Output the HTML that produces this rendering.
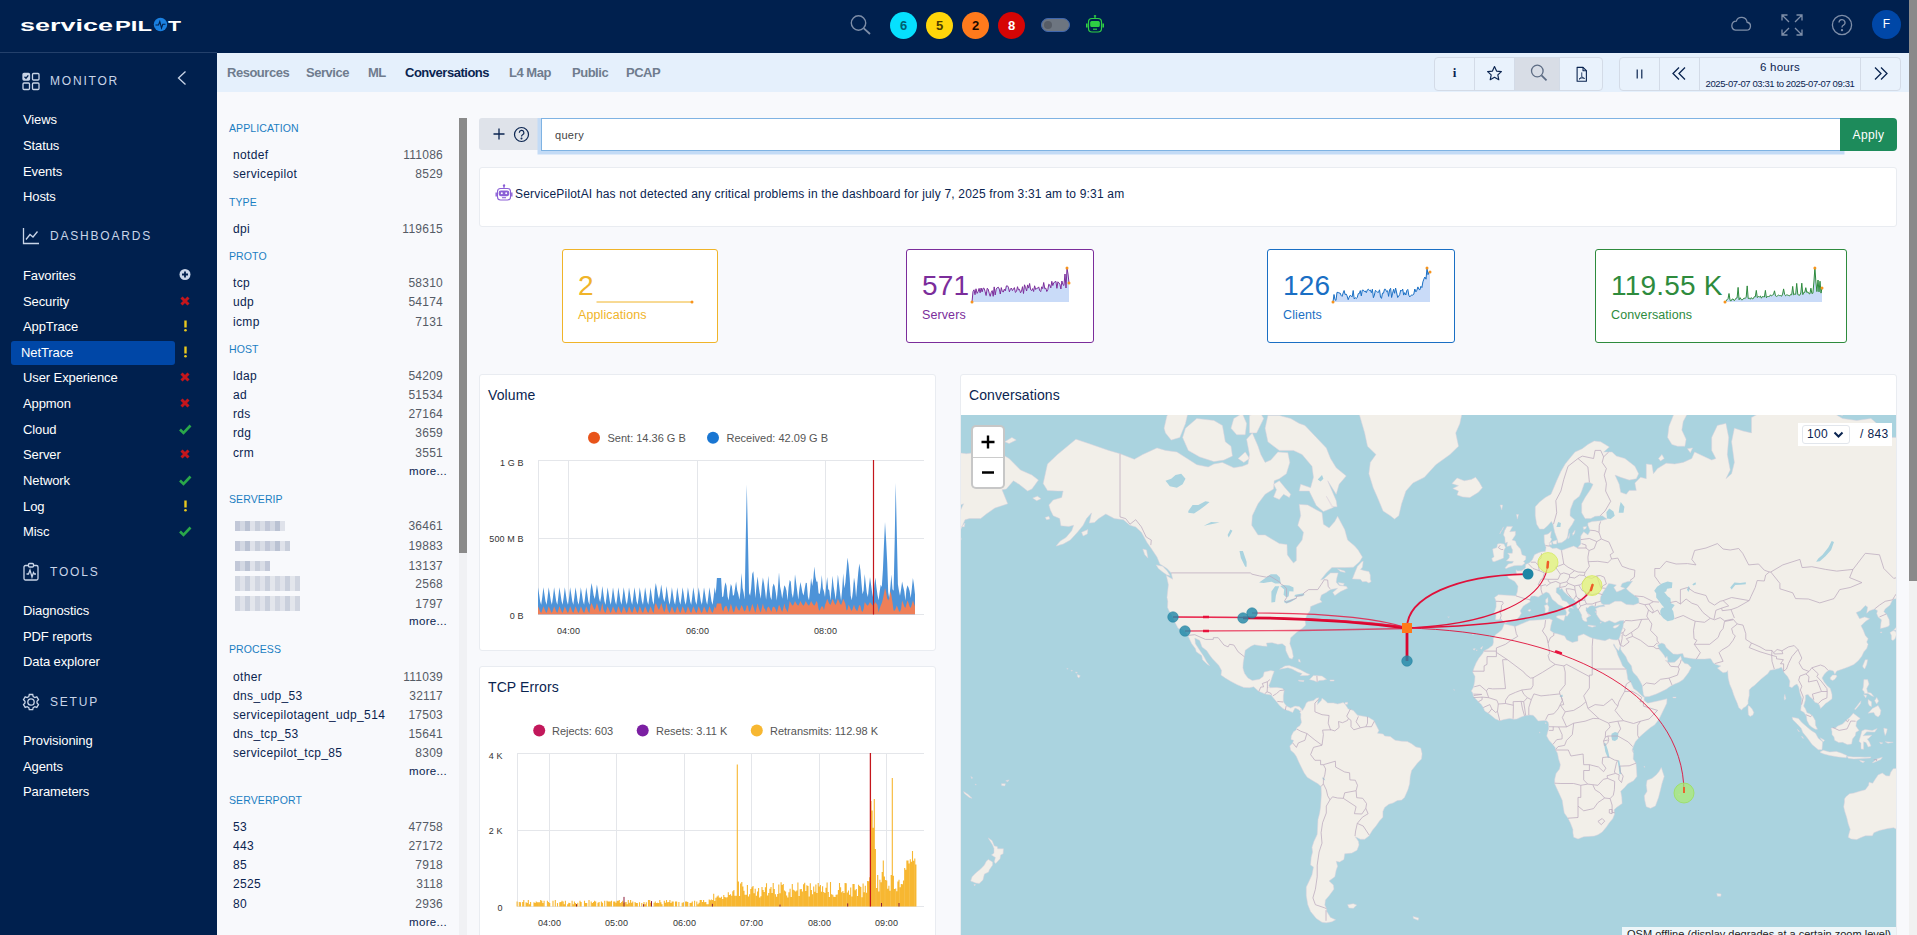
<!DOCTYPE html>
<html lang="en">
<head>
<meta charset="utf-8">
<title>ServicePilot - NetTrace Conversations</title>
<style>
*{box-sizing:border-box;margin:0;padding:0}
html,body{width:1917px;height:935px;overflow:hidden;background:#f8f9fc;font-family:"Liberation Sans",sans-serif;color:#00204e}
body{position:relative}
.abs{position:absolute}
/* top bar */
#top{z-index:2;position:absolute;left:0;top:0;width:1909px;height:53px;background:#00204e}
#side{position:absolute;left:0;top:0;width:217px;height:935px;background:#00204e}
#sline{z-index:3;position:absolute;left:0;top:52px;width:217px;height:1px;background:#23406b}
#side .hd{margin-top:1px;position:absolute;left:50px;font-size:12px;letter-spacing:1.8px;color:#c9d5e8;white-space:nowrap}
#side .it{margin-top:1px;position:absolute;left:23px;font-size:13px;color:#fff;white-space:nowrap;letter-spacing:-0.1px}
#side .st{margin-top:1px;position:absolute;left:178px;width:14px;height:14px}
/* tab bar */
#tabs{position:absolute;left:217px;top:53px;width:1692px;height:38.5px;background:#e5f0fc}
#tabs .t{position:absolute;top:12px;font-size:13px;font-weight:bold;color:#6f7c8e;white-space:nowrap;letter-spacing:-0.48px}
#tabs .t.on{color:#0a2450}
.bdg{position:absolute;top:12px;width:27px;height:27px;border-radius:50%;font-size:13px;font-weight:bold;text-align:center;line-height:27px}
.bg{position:absolute;top:3.5px;height:34px;border:1px solid #d3dbe7;border-radius:4px;background:#e9f2fc}
.bg .d{position:absolute;top:0;width:1px;height:32px;background:#d3dbe7}

#fac .h{margin-top:1px;position:absolute;left:229px;font-size:10.5px;color:#1b7ec2;letter-spacing:.1px;white-space:nowrap}
#fac .r{margin-top:1px;position:absolute;left:233px;width:210px;font-size:12px;color:#0a2450;letter-spacing:.35px;white-space:nowrap}
#fac .r b{position:absolute;right:0;top:0;font-weight:normal;color:#555b66;letter-spacing:.25px}
#fac .m{margin-top:1px;position:absolute;left:233px;width:214px;text-align:right;font-size:11.5px;color:#0a2450;letter-spacing:.3px}
#fac .bl{position:absolute;left:235px;height:10px;background:repeating-linear-gradient(90deg,#c2c8d8 0 5px,#d3d8e3 5px 10px,#bac2d3 10px 15px,#dfe2ea 15px 20px,#c8cedb 20px 25px,#d9dde6 25px 30px);filter:blur(.6px)}
#fac .bl.t{height:15px;background:repeating-linear-gradient(90deg,#d0d5e0 0 5px,#dfe2ea 5px 10px,#c9cfdc 10px 15px,#e3e6ec 15px 20px)}
#ftr{position:absolute;left:459px;top:553px;width:8px;height:382px;background:#f0f1f4}
#fsb{position:absolute;left:459px;top:118px;width:8px;height:435px;background:#8a8a8a}


#qadd{position:absolute;left:479px;top:118px;width:59px;height:32px;background:#dfe3ea;border-radius:3px 0 0 3px}
#qin{position:absolute;left:541px;top:118px;width:1300px;height:33px;background:#fff;border:1px solid #7fb3e3;box-shadow:0 0 0 3.5px #c3dbf6;clip-path:inset(0 -4px -4px -4px);font-size:11px;color:#444;padding:10px 0 0 13px;letter-spacing:.3px}
#qap{position:absolute;left:1840px;top:118px;width:57px;height:33px;background:#1d8b5b;border-radius:0 4px 4px 0;color:#fff;font-size:12px;text-align:center;line-height:35px;letter-spacing:.4px}
.pan{position:absolute;background:#fff;border:1px solid #e9ecf1;border-radius:3px}
#ai{left:479px;top:167px;width:1418px;height:60px}
#ai span{position:absolute;left:35px;top:19px;font-size:12px;color:#0a2450;letter-spacing:.19px;white-space:nowrap}
.pt{position:absolute;left:8px;top:12px;font-size:14px;color:#0a2450;letter-spacing:.1px;white-space:nowrap}


.kpi{position:absolute;top:249px;height:94px;background:#fff;border:1px solid;border-radius:3px}
.kpi .v{position:absolute;left:15px;top:19px;font-size:28px;line-height:34px;letter-spacing:.2px;white-space:nowrap}
.kpi .l{position:absolute;left:15px;top:58px;font-size:12.5px;letter-spacing:.1px;white-space:nowrap}


.ax{font-size:9px;fill:#333;letter-spacing:.1px}
.lg{font-size:11px;fill:#555;letter-spacing:0}


#map{position:absolute;left:961px;top:415px;width:935px;height:520px;overflow:hidden;background:#aad3df}
#zc{position:absolute;left:10px;top:10px;width:34px;height:64px;border:2px solid rgba(0,0,0,.22);border-radius:5px;background:#fff}
#zc i{position:absolute;left:0;top:29.500px;width:30px;height:1px;background:#ccc}
#msel{position:absolute;left:837px;top:8px;width:94px;height:23px;background:#fff;font:12px "Liberation Sans",sans-serif;color:#0a2450}
#attr{position:absolute;right:0;top:512px;height:20px;background:rgba(255,255,255,.8);padding:1px 5px;font-size:11px;color:#222;white-space:nowrap}

/* page scrollbar */
#psb{position:absolute;left:1909px;top:0;width:8px;height:935px;background:#f1f1f1}
#psb i{position:absolute;left:0;top:0;width:8px;height:581px;background:#8a8a8a}
</style>
</head>
<body>
<div id="top">
<svg class="abs" style="left:18px;top:13px" width="168" height="24" viewBox="0 0 168 24">
<text x="2" y="17.5" font-family="Liberation Sans, sans-serif" font-weight="bold" font-size="16.5" fill="#fff" textLength="93" lengthAdjust="spacingAndGlyphs">service</text>
<text x="97" y="17.5" font-family="Liberation Sans, sans-serif" font-weight="bold" font-size="14.5" fill="#fff" textLength="37" lengthAdjust="spacingAndGlyphs">PIL</text>
<circle cx="142.5" cy="11.5" r="6.7" fill="#1a80e0"/>
<path d="M137.5 12H140.5L141.8 8.5L143.5 15L144.8 11.2H147.5" stroke="#00204e" stroke-width="1.1" fill="none"/>
<text x="150" y="17.5" font-family="Liberation Sans, sans-serif" font-weight="bold" font-size="14.5" fill="#fff" textLength="13" lengthAdjust="spacingAndGlyphs">T</text>
</svg>
<svg class="abs" style="left:848px;top:13px" width="26" height="24" viewBox="0 0 26 24" fill="none" stroke="#7e8ea8" stroke-width="1.4"><circle cx="10.5" cy="10" r="7.2"/><path d="M15.8 15.3L22 21" stroke-width="1.8"/></svg>
<div class="bdg" style="left:890px;background:#06e0fe;color:#006171">6</div>
<div class="bdg" style="left:926px;background:#ffd60a;color:#4a3c00">5</div>
<div class="bdg" style="left:962px;background:#ff7a1c;color:#1a0a00">2</div>
<div class="bdg" style="left:998px;background:#d60505;color:#fff">8</div>
<div class="abs" style="left:1041px;top:18px;width:29px;height:14px;border-radius:7px;background:#6d7580;border:1px solid #3f66ad"><i class="abs" style="left:2px;top:2px;width:8px;height:8px;border-radius:4px;background:#565c66"></i></div>
<svg class="abs" style="left:1084px;top:13px" width="22" height="22" viewBox="0 0 22 22" fill="none" stroke="#2fd044" stroke-width="1.2"><path d="M11 2V5M9.8 3H12.2"/><rect x="4.5" y="5.5" width="13" height="13.5" rx="3.5"/><rect x="6.8" y="8.5" width="8.4" height="5" rx="1" fill="#2fd044"/><path d="M9 16.2H13"/><path d="M2.8 10.5V14.5M19.2 10.5V14.5" stroke-width="1.6"/></svg>
<svg class="abs" style="left:1729px;top:15px" width="24" height="18" viewBox="0 0 24 18" fill="none" stroke="#7e8ea8" stroke-width="1.3"><path d="M6.5 15.2h11a4 4 0 0 0 .6-7.95A5.6 5.6 0 0 0 7.3 6.1 4.6 4.6 0 0 0 6.5 15.2z"/></svg>
<svg class="abs" style="left:1780px;top:13px" width="24" height="24" viewBox="0 0 24 24" fill="none" stroke="#7e8ea8" stroke-width="1.3"><path d="M2 7.5V2H7.5M2 2L9 9M16.5 2H22V7.5M22 2L15 9M2 16.5V22H7.5M2 22L9 15M16.5 22H22V16.5M22 22L15 15"/></svg>
<svg class="abs" style="left:1831px;top:14px" width="22" height="22" viewBox="0 0 22 22" fill="none" stroke="#7e8ea8" stroke-width="1.3"><circle cx="11" cy="11" r="9.6"/><path d="M8 8.5a3 3 0 1 1 4.2 2.8c-.9.5-1.2 1-1.2 2.2"/><circle cx="11" cy="16.2" r=".5" fill="#7e8ea8"/></svg>
<div class="abs" style="left:1872px;top:10px;width:29px;height:29px;border-radius:50%;background:#0047a7;color:#fff;font-size:12px;text-align:center;line-height:29px">F</div>
</div>
<div id="side">
<svg class="abs" style="left:21px;top:70.5px" width="20" height="20" viewBox="0 0 20 20" fill="none" stroke="#c9d5e8" stroke-width="1.3"><rect x="2" y="2.5" width="6.5" height="6.5" rx="1" fill="#c9d5e8"/><rect x="11.5" y="2.5" width="6.5" height="6.5" rx="1"/><rect x="2" y="12" width="6.5" height="6.5" rx="1"/><rect x="11.5" y="12" width="6.5" height="6.5" rx="1"/><path d="M3.5 5.700L5 7.200L7.300 4.300" stroke="#00204e" stroke-width="1.300"/></svg>
<div class="hd" style="top:73px">MONITOR</div>
<svg class="abs" style="left:176px;top:70px" width="12" height="16" viewBox="0 0 12 16" fill="none" stroke="#c9d5e8" stroke-width="1.3"><path d="M9.5 1.5L2.5 8L9.5 14.5"/></svg>
<div class="it" style="top:111px;">Views</div>
<div class="it" style="top:137px;">Status</div>
<div class="it" style="top:163px;">Events</div>
<div class="it" style="top:188px;">Hosts</div>
<svg class="abs" style="left:21px;top:226px" width="20" height="20" viewBox="0 0 20 20" fill="none" stroke="#c9d5e8" stroke-width="1.3"><path d="M2.5 2V17.5H18"/><path d="M5 13.5L9 8.5L12 11L16.5 5.5"/></svg>
<div class="hd" style="top:228px">DASHBOARDS</div>
<div class="it" style="top:267px;">Favorites</div>
<svg class="st" style="top:267px" viewBox="0 0 14 14"><circle cx="7" cy="6.5" r="5.5" fill="#c9d5e8"/><path d="M7 3.5V9.5M4 6.5H10" stroke="#00204e" stroke-width="1.8"/></svg>
<div class="it" style="top:293px;">Security</div>
<svg class="st" style="top:293px" viewBox="0 0 14 14"><path d="M3.5 3.5L10.5 10.5M10.5 3.5L3.5 10.5" stroke="#c4161c" stroke-width="3" stroke-linecap="butt"/></svg>
<div class="it" style="top:318px;">AppTrace</div>
<svg class="st" style="top:318px" viewBox="0 0 14 14"><path d="M7.5 1.5V8.5" stroke="#e8c81f" stroke-width="2.4"/><circle cx="7.5" cy="11.3" r="1.3" fill="#e8c81f"/></svg>
<div class="abs" style="left:11px;top:341px;width:164px;height:24px;margin-top:-.5px;background:#0047a7;border-radius:3px"></div>
<div class="it" style="top:344px;left:21px">NetTrace</div>
<svg class="st" style="top:344px" viewBox="0 0 14 14"><path d="M7.5 1.5V8.5" stroke="#e8c81f" stroke-width="2.4"/><circle cx="7.5" cy="11.3" r="1.3" fill="#e8c81f"/></svg>
<div class="it" style="top:369px;">User Experience</div>
<svg class="st" style="top:369px" viewBox="0 0 14 14"><path d="M3.5 3.5L10.5 10.5M10.5 3.5L3.5 10.5" stroke="#c4161c" stroke-width="3" stroke-linecap="butt"/></svg>
<div class="it" style="top:395px;">Appmon</div>
<svg class="st" style="top:395px" viewBox="0 0 14 14"><path d="M3.5 3.5L10.5 10.5M10.5 3.5L3.5 10.5" stroke="#c4161c" stroke-width="3" stroke-linecap="butt"/></svg>
<div class="it" style="top:421px;">Cloud</div>
<svg class="st" style="top:421px" viewBox="0 0 14 14"><path d="M2 7.5L5.5 11L12.5 3.5" stroke="#2aa84a" stroke-width="2.6" fill="none"/></svg>
<div class="it" style="top:446px;">Server</div>
<svg class="st" style="top:446px" viewBox="0 0 14 14"><path d="M3.5 3.5L10.5 10.5M10.5 3.5L3.5 10.5" stroke="#c4161c" stroke-width="3" stroke-linecap="butt"/></svg>
<div class="it" style="top:472px;">Network</div>
<svg class="st" style="top:472px" viewBox="0 0 14 14"><path d="M2 7.5L5.5 11L12.5 3.5" stroke="#2aa84a" stroke-width="2.6" fill="none"/></svg>
<div class="it" style="top:498px;">Log</div>
<svg class="st" style="top:498px" viewBox="0 0 14 14"><path d="M7.5 1.5V8.5" stroke="#e8c81f" stroke-width="2.4"/><circle cx="7.5" cy="11.3" r="1.3" fill="#e8c81f"/></svg>
<div class="it" style="top:523px;">Misc</div>
<svg class="st" style="top:523px" viewBox="0 0 14 14"><path d="M2 7.5L5.5 11L12.5 3.5" stroke="#2aa84a" stroke-width="2.6" fill="none"/></svg>
<svg class="abs" style="left:21px;top:561.5px" width="20" height="20" viewBox="0 0 20 20" fill="none" stroke="#c9d5e8" stroke-width="1.3"><rect x="3" y="3.5" width="14" height="14.5" rx="1.5"/><rect x="7.5" y="1.5" width="5" height="3.5" rx="1" fill="#00204e"/><path d="M5.5 12H7.5L9 8L11 15L12.5 10.5L13.5 12H15"/></svg>
<div class="hd" style="top:564px">TOOLS</div>
<div class="it" style="top:602px;">Diagnostics</div>
<div class="it" style="top:628px;">PDF reports</div>
<div class="it" style="top:653px;">Data explorer</div>
<svg class="abs" style="left:21px;top:691.5px" width="20" height="20" viewBox="0 0 20 20" fill="none" stroke="#c9d5e8" stroke-width="1.3"><circle cx="10" cy="10" r="3.2"/><path d="M8.3 2.5h3.4l.5 2.1 1.6.9 2-.7 1.7 2.9-1.5 1.5v1.8l1.5 1.5-1.7 2.9-2-.7-1.6.9-.5 2.1H8.3l-.5-2.1-1.6-.9-2 .7-1.7-2.9 1.5-1.5V9.2L2.5 7.7l1.7-2.9 2 .7 1.6-.9z"/></svg>
<div class="hd" style="top:694px">SETUP</div>
<div class="it" style="top:732px;">Provisioning</div>
<div class="it" style="top:758px;">Agents</div>
<div class="it" style="top:783px;">Parameters</div>
</div>
<div id="sline"></div>
<div id="tabs">
<span class="t" style="left:10px">Resources</span>
<span class="t" style="left:89px">Service</span>
<span class="t" style="left:151px">ML</span>
<span class="t on" style="left:188px">Conversations</span>
<span class="t" style="left:292px">L4 Map</span>
<span class="t" style="left:355px">Public</span>
<span class="t" style="left:409px">PCAP</span>
<div class="bg" style="left:1217px;width:169px">
<i class="abs" style="left:80px;top:0;width:44px;height:32px;background:#d8dde6"></i>
<i class="d" style="left:39px"></i><i class="d" style="left:79px"></i><i class="d" style="left:124px"></i>
<div class="abs" style="left:0;top:7px;width:39px;text-align:center;font:bold 13px 'Liberation Serif',serif;color:#0a2450">i</div>
<svg class="abs" style="left:51px;top:7px" width="17" height="17" viewBox="0 0 19 19" fill="none" stroke="#0a2450" stroke-width="1.3" stroke-linejoin="round"><path d="M9.5 1.8l2.3 5 5.4.6-4 3.7 1.1 5.4-4.8-2.8-4.8 2.8 1.100-5.4-4-3.700 5.400-.6z"/></svg>
<svg class="abs" style="left:94px;top:5.5px" width="20" height="20" viewBox="0 0 20 20" fill="none" stroke="#5d6c84" stroke-width="1.3"><circle cx="8.300" cy="8" r="5.800"/><path d="M12.5 12.300L17.500 17.300" stroke-width="1.700"/></svg>
<svg class="abs" style="left:140px;top:8px" width="13.5" height="17" viewBox="0 0 16 20" fill="none" stroke="#0a2450" stroke-width="1.3" stroke-linejoin="round"><path d="M2.500 1.500h7l4 4v12.500h-11z"/><path d="M9.500 1.500v4h4" /><path d="M8 7.500v5M4.800 15.500c2-1.500 4.500-1.800 6.600-.8M8 12.500c-1 1.500-2 2.500-3.200 3M8 12.500c1 1.200 2 1.800 3.400 2.200" stroke-width="1"/></svg>
</div>
<div class="bg" style="left:1402px;width:282px">
<i class="d" style="left:39px"></i><i class="d" style="left:79px"></i><i class="d" style="left:240px"></i>
<svg class="abs" style="left:13.5px;top:10.5px" width="11" height="12" viewBox="0 0 12 13" stroke="#0a2450" stroke-width="1.3"><path d="M3.500 1.500v10M8.500 1.500v10"/></svg>
<svg class="abs" style="left:50px;top:8px" width="18" height="15" viewBox="0 0 18 15" fill="none" stroke="#0a2450" stroke-width="1.3"><path d="M9 1.500L3 7.500L9 13.500M15 1.500L9 7.500L15 13.500"/></svg>
<div class="abs" style="left:80px;top:3px;width:160px;text-align:center;font-size:11.5px;color:#0a2450;letter-spacing:.2px">6 hours</div>
<div class="abs" style="left:80px;top:20px;width:160px;text-align:center;font-size:9.5px;letter-spacing:-0.4px;color:#0a2450;white-space:nowrap">2025-07-07 03:31 to 2025-07-07 09:31</div>
<svg class="abs" style="left:252px;top:8px" width="18" height="15" viewBox="0 0 18 15" fill="none" stroke="#0a2450" stroke-width="1.3"><path d="M3 1.500L9 7.500L3 13.500M9 1.500L15 7.500L9 13.500"/></svg>
</div>
</div>
<div id="fac">
<div class="h" style="top:121px">APPLICATION</div>
<div class="r" style="top:147px">notdef<b>111086</b></div>
<div class="r" style="top:166px">servicepilot<b>8529</b></div>
<div class="h" style="top:195px">TYPE</div>
<div class="r" style="top:221px">dpi<b>119615</b></div>
<div class="h" style="top:249px">PROTO</div>
<div class="r" style="top:275px">tcp<b>58310</b></div>
<div class="r" style="top:294px">udp<b>54174</b></div>
<div class="r" style="top:314px">icmp<b>7131</b></div>
<div class="h" style="top:342px">HOST</div>
<div class="r" style="top:368px">ldap<b>54209</b></div>
<div class="r" style="top:387px">ad<b>51534</b></div>
<div class="r" style="top:406px">rds<b>27164</b></div>
<div class="r" style="top:425px">rdg<b>3659</b></div>
<div class="r" style="top:445px">crm<b>3551</b></div>
<div class="m" style="top:464px">more...</div>
<div class="h" style="top:492px">SERVERIP</div>
<div class="bl" style="top:521px;width:50px"></div>
<div class="r" style="top:518px">&nbsp;<b>36461</b></div>
<div class="bl" style="top:541px;width:55px"></div>
<div class="r" style="top:538px">&nbsp;<b>19883</b></div>
<div class="bl" style="top:561px;width:35px"></div>
<div class="r" style="top:558px">&nbsp;<b>13137</b></div>
<div class="bl t" style="top:576px;width:65px"></div>
<div class="r" style="top:576px">&nbsp;<b>2568</b></div>
<div class="bl t" style="top:596px;width:65px"></div>
<div class="r" style="top:596px">&nbsp;<b>1797</b></div>
<div class="m" style="top:614px">more...</div>
<div class="h" style="top:642px">PROCESS</div>
<div class="r" style="top:669px">other<b>111039</b></div>
<div class="r" style="top:688px">dns_udp_53<b>32117</b></div>
<div class="r" style="top:707px">servicepilotagent_udp_514<b>17503</b></div>
<div class="r" style="top:726px">dns_tcp_53<b>15641</b></div>
<div class="r" style="top:745px">servicepilot_tcp_85<b>8309</b></div>
<div class="m" style="top:764px">more...</div>
<div class="h" style="top:793px">SERVERPORT</div>
<div class="r" style="top:819px">53<b>47758</b></div>
<div class="r" style="top:838px">443<b>27172</b></div>
<div class="r" style="top:857px">85<b>7918</b></div>
<div class="r" style="top:876px">2525<b>3118</b></div>
<div class="r" style="top:896px">80<b>2936</b></div>
<div class="m" style="top:915px">more...</div>
<div id="fsb"></div><div id="ftr"></div></div>
<div id="qadd"><svg class="abs" style="left:13px;top:9px" width="14" height="14" viewBox="0 0 14 14" stroke="#0a2450" stroke-width="1.3"><path d="M7 1.5V12.500M1.500 7H12.500"/></svg>
<svg class="abs" style="left:34px;top:8px" width="17" height="17" viewBox="0 0 17 17" fill="none" stroke="#0a2450" stroke-width="1.2"><circle cx="8.5" cy="8.500" r="7"/><path d="M6.300 6.700a2.300 2.300 0 1 1 3.300 2.100c-.8.400-1.100.9-1.100 1.700"/><circle cx="8.500" cy="12.600" r=".4" fill="#0a2450"/></svg></div>
<div id="qin">query</div><div id="qap">Apply</div>
<div id="ai" class="pan"><svg class="abs" style="left:15px;top:16px" width="18" height="19" viewBox="0 0 18 19" fill="none" stroke="#8b5fd6" stroke-width="1.1"><path d="M9 1.500V4"/><circle cx="9" cy="1.600" r=".7" fill="#8b5fd6"/><rect x="2.500" y="4.500" width="13" height="11.500" rx="3"/><rect x="4.300" y="7" width="9.400" height="4.600" rx="1.500" fill="#8b5fd6"/><circle cx="6.800" cy="9.300" r="1" fill="#fff" stroke="none"/><circle cx="11.200" cy="9.300" r="1" fill="#fff" stroke="none"/><path d="M7 13.700H11"/><path d="M1.200 8.500V12.500M16.800 8.500V12.500" stroke-width="1.400"/></svg>
<span>ServicePilotAI has not detected any critical problems in the dashboard for july 7, 2025 from 3:31 am to 9:31 am</span></div>
<div class="kpi" style="left:562px;width:156px;border-color:#f0b429;color:#f0b429"><div class="v">2</div><div class="l">Applications</div></div>
<div class="kpi" style="left:906px;width:188px;border-color:#7b2d9b;color:#7b2d9b"><div class="v">571</div><div class="l">Servers</div></div>
<div class="kpi" style="left:1267px;width:188px;border-color:#1a6fc4;color:#1a6fc4"><div class="v">126</div><div class="l">Clients</div></div>
<div class="kpi" style="left:1595px;width:252px;border-color:#2e8b3d;color:#2e8b3d"><div class="v">119.55 K</div><div class="l">Conversations</div></div>
<svg class="abs" style="left:0;top:0;pointer-events:none" width="1909" height="360" viewBox="0 0 1909 360"><path d="M596.500 302H692" stroke="#f0b429" stroke-width="1" fill="none"/><circle cx="692" cy="302" r="1.500" fill="#f7941d"/><path d="M972.0,302.0 L973.0,291.6 L974.0,289.8 L975.0,294.7 L976.0,288.8 L977.1,293.4 L978.1,291.6 L979.1,288.4 L980.1,292.8 L981.1,288.0 L982.1,291.9 L983.1,288.2 L984.1,288.3 L985.1,291.5 L986.1,295.5 L987.2,288.3 L988.2,289.2 L989.2,293.2 L990.2,296.3 L991.2,292.5 L992.2,290.6 L993.2,296.3 L994.2,286.9 L995.2,294.9 L996.2,289.1 L997.3,287.6 L998.3,287.2 L999.3,289.1 L1000.3,294.0 L1001.3,287.6 L1002.3,291.5 L1003.3,292.0 L1004.3,289.2 L1005.3,290.9 L1006.4,285.9 L1007.4,285.8 L1008.4,287.2 L1009.4,291.8 L1010.4,289.2 L1011.4,288.0 L1012.4,290.6 L1013.4,289.2 L1014.4,287.6 L1015.4,292.4 L1016.5,291.4 L1017.5,286.7 L1018.5,289.9 L1019.5,289.3 L1020.5,292.8 L1021.5,291.2 L1022.5,286.7 L1023.5,293.5 L1024.5,284.8 L1025.6,287.7 L1026.6,291.0 L1027.6,284.9 L1028.6,288.1 L1029.6,283.5 L1030.6,289.7 L1031.6,290.6 L1032.6,288.6 L1033.6,291.5 L1034.6,285.8 L1035.7,289.5 L1036.7,288.4 L1037.7,288.2 L1038.7,286.9 L1039.7,290.6 L1040.7,291.6 L1041.7,286.8 L1042.7,288.6 L1043.7,282.5 L1044.8,288.8 L1045.8,288.1 L1046.8,291.5 L1047.8,289.7 L1048.8,284.2 L1049.8,285.1 L1050.8,287.9 L1051.8,281.3 L1052.8,285.6 L1053.8,282.6 L1054.9,282.0 L1055.9,281.3 L1056.9,288.3 L1057.9,281.8 L1058.9,282.9 L1059.9,284.3 L1060.9,289.0 L1061.9,281.0 L1062.9,284.6 L1063.9,285.5 L1065.0,274.0 L1066.0,288.0 L1067.0,268.0 L1068.0,274.0 L1069.0,283.0 L1069.0,302 L972.0,302Z" fill="#c9dbf8" stroke="none"/><path d="M972.0,302.0 L973.0,291.6 L974.0,289.8 L975.0,294.7 L976.0,288.8 L977.1,293.4 L978.1,291.6 L979.1,288.4 L980.1,292.8 L981.1,288.0 L982.1,291.9 L983.1,288.2 L984.1,288.3 L985.1,291.5 L986.1,295.5 L987.2,288.3 L988.2,289.2 L989.2,293.2 L990.2,296.3 L991.2,292.5 L992.2,290.6 L993.2,296.3 L994.2,286.9 L995.2,294.9 L996.2,289.1 L997.3,287.6 L998.3,287.2 L999.3,289.1 L1000.3,294.0 L1001.3,287.6 L1002.3,291.5 L1003.3,292.0 L1004.3,289.2 L1005.3,290.9 L1006.4,285.9 L1007.4,285.8 L1008.4,287.2 L1009.4,291.8 L1010.4,289.2 L1011.4,288.0 L1012.4,290.6 L1013.4,289.2 L1014.4,287.6 L1015.4,292.4 L1016.5,291.4 L1017.5,286.7 L1018.5,289.9 L1019.5,289.3 L1020.5,292.8 L1021.5,291.2 L1022.5,286.7 L1023.5,293.5 L1024.5,284.8 L1025.6,287.7 L1026.6,291.0 L1027.6,284.9 L1028.6,288.1 L1029.6,283.5 L1030.6,289.7 L1031.6,290.6 L1032.6,288.6 L1033.6,291.5 L1034.6,285.8 L1035.7,289.5 L1036.7,288.4 L1037.7,288.2 L1038.7,286.9 L1039.7,290.6 L1040.7,291.6 L1041.7,286.8 L1042.7,288.6 L1043.7,282.5 L1044.8,288.8 L1045.8,288.1 L1046.8,291.5 L1047.8,289.7 L1048.8,284.2 L1049.8,285.1 L1050.8,287.9 L1051.8,281.3 L1052.8,285.6 L1053.8,282.6 L1054.9,282.0 L1055.9,281.3 L1056.9,288.3 L1057.9,281.8 L1058.9,282.9 L1059.9,284.3 L1060.9,289.0 L1061.9,281.0 L1062.9,284.6 L1063.9,285.5 L1065.0,274.0 L1066.0,288.0 L1067.0,268.0 L1068.0,274.0 L1069.0,283.0" fill="none" stroke="#7b2d9b" stroke-width="1"/><circle cx="972.0" cy="302.0" r="1.5" fill="#f7941d"/><circle cx="1067.0" cy="268.0" r="1.5" fill="#f7941d"/><circle cx="1069.0" cy="283.0" r="1.5" fill="#f7941d"/><path d="M1333.0,302.0 L1334.0,294.5 L1335.0,299.7 L1336.0,300.4 L1337.0,292.3 L1338.1,292.5 L1339.1,293.0 L1340.1,293.0 L1341.1,295.4 L1342.1,296.4 L1343.1,293.1 L1344.1,290.5 L1345.1,294.6 L1346.1,294.0 L1347.1,295.9 L1348.2,299.7 L1349.2,297.1 L1350.2,295.3 L1351.2,296.2 L1352.2,296.8 L1353.2,290.5 L1354.2,298.9 L1355.2,297.7 L1356.2,298.5 L1357.2,297.7 L1358.3,293.6 L1359.3,293.6 L1360.3,290.6 L1361.3,295.9 L1362.3,290.1 L1363.3,290.1 L1364.3,291.5 L1365.3,291.0 L1366.3,292.7 L1367.4,289.8 L1368.4,289.2 L1369.4,290.6 L1370.4,290.1 L1371.4,292.7 L1372.4,289.2 L1373.4,297.7 L1374.4,295.0 L1375.4,290.3 L1376.4,291.3 L1377.5,292.2 L1378.5,292.3 L1379.5,289.8 L1380.5,297.0 L1381.5,298.4 L1382.5,293.1 L1383.5,293.2 L1384.5,289.2 L1385.5,289.3 L1386.6,291.7 L1387.6,290.8 L1388.6,296.4 L1389.6,289.7 L1390.6,288.3 L1391.6,297.5 L1392.6,293.2 L1393.6,289.3 L1394.6,293.3 L1395.6,288.0 L1396.7,293.0 L1397.7,297.5 L1398.7,296.2 L1399.7,294.5 L1400.7,290.1 L1401.7,291.1 L1402.7,289.1 L1403.7,295.1 L1404.7,292.6 L1405.8,295.0 L1406.8,290.5 L1407.8,289.4 L1408.8,295.2 L1409.8,296.9 L1410.8,295.5 L1411.8,295.0 L1412.8,295.1 L1413.8,294.2 L1414.8,289.0 L1415.9,291.9 L1416.9,290.2 L1417.9,286.9 L1418.9,289.3 L1419.9,289.8 L1420.9,286.3 L1421.9,287.6 L1422.9,281.9 L1423.9,279.1 L1424.9,277.0 L1426.0,279.2 L1427.0,268.0 L1428.0,274.7 L1429.0,271.9 L1430.0,272.0 L1430.0,302 L1333.0,302Z" fill="#c9dbf8" stroke="none"/><path d="M1333.0,302.0 L1334.0,294.5 L1335.0,299.7 L1336.0,300.4 L1337.0,292.3 L1338.1,292.5 L1339.1,293.0 L1340.1,293.0 L1341.1,295.4 L1342.1,296.4 L1343.1,293.1 L1344.1,290.5 L1345.1,294.6 L1346.1,294.0 L1347.1,295.9 L1348.2,299.7 L1349.2,297.1 L1350.2,295.3 L1351.2,296.2 L1352.2,296.8 L1353.2,290.5 L1354.2,298.9 L1355.2,297.7 L1356.2,298.5 L1357.2,297.7 L1358.3,293.6 L1359.3,293.6 L1360.3,290.6 L1361.3,295.9 L1362.3,290.1 L1363.3,290.1 L1364.3,291.5 L1365.3,291.0 L1366.3,292.7 L1367.4,289.8 L1368.4,289.2 L1369.4,290.6 L1370.4,290.1 L1371.4,292.7 L1372.4,289.2 L1373.4,297.7 L1374.4,295.0 L1375.4,290.3 L1376.4,291.3 L1377.5,292.2 L1378.5,292.3 L1379.5,289.8 L1380.5,297.0 L1381.5,298.4 L1382.5,293.1 L1383.5,293.2 L1384.5,289.2 L1385.5,289.3 L1386.6,291.7 L1387.6,290.8 L1388.6,296.4 L1389.6,289.7 L1390.6,288.3 L1391.6,297.5 L1392.6,293.2 L1393.6,289.3 L1394.6,293.3 L1395.6,288.0 L1396.7,293.0 L1397.7,297.5 L1398.7,296.2 L1399.7,294.5 L1400.7,290.1 L1401.7,291.1 L1402.7,289.1 L1403.7,295.1 L1404.7,292.6 L1405.8,295.0 L1406.8,290.5 L1407.8,289.4 L1408.8,295.2 L1409.8,296.9 L1410.8,295.5 L1411.8,295.0 L1412.8,295.1 L1413.8,294.2 L1414.8,289.0 L1415.9,291.9 L1416.9,290.2 L1417.9,286.9 L1418.9,289.3 L1419.9,289.8 L1420.9,286.3 L1421.9,287.6 L1422.9,281.9 L1423.9,279.1 L1424.9,277.0 L1426.0,279.2 L1427.0,268.0 L1428.0,274.7 L1429.0,271.9 L1430.0,272.0" fill="none" stroke="#1a6fc4" stroke-width="1"/><circle cx="1333.0" cy="302.0" r="1.5" fill="#f7941d"/><circle cx="1427.0" cy="268.0" r="1.5" fill="#f7941d"/><circle cx="1430.0" cy="272.0" r="1.5" fill="#f7941d"/><path d="M1725.0,302.0 L1726.0,300.7 L1727.0,299.8 L1728.0,298.8 L1729.0,293.5 L1730.1,300.5 L1731.1,300.9 L1732.1,299.1 L1733.1,299.0 L1734.1,300.6 L1735.1,299.8 L1736.1,298.1 L1737.1,297.9 L1738.1,287.4 L1739.1,299.8 L1740.2,297.7 L1741.2,299.6 L1742.2,300.0 L1743.2,299.0 L1744.2,298.0 L1745.2,298.5 L1746.2,297.1 L1747.2,285.9 L1748.2,298.5 L1749.2,298.1 L1750.3,299.2 L1751.3,297.6 L1752.3,298.9 L1753.3,298.6 L1754.3,296.7 L1755.3,296.8 L1756.3,290.4 L1757.3,297.6 L1758.3,296.5 L1759.4,296.9 L1760.4,296.0 L1761.4,298.2 L1762.4,296.5 L1763.4,296.7 L1764.4,297.0 L1765.4,290.4 L1766.4,297.8 L1767.4,296.5 L1768.4,296.5 L1769.5,296.4 L1770.5,294.8 L1771.5,296.0 L1772.5,295.1 L1773.5,294.5 L1774.5,290.8 L1775.5,295.8 L1776.5,296.4 L1777.5,295.8 L1778.6,295.1 L1779.6,295.6 L1780.6,295.6 L1781.6,296.2 L1782.6,294.1 L1783.6,288.9 L1784.6,294.4 L1785.6,295.8 L1786.6,294.9 L1787.6,295.0 L1788.7,295.5 L1789.7,295.9 L1790.7,294.4 L1791.7,294.8 L1792.7,286.4 L1793.7,294.9 L1794.7,294.1 L1795.7,294.3 L1796.7,283.4 L1797.8,294.6 L1798.8,295.0 L1799.8,295.2 L1800.8,293.0 L1801.8,283.2 L1802.8,294.6 L1803.8,292.4 L1804.8,292.3 L1805.8,287.7 L1806.8,292.5 L1807.9,291.9 L1808.9,293.6 L1809.9,293.9 L1810.9,288.2 L1811.9,293.5 L1812.9,293.2 L1813.9,282.0 L1814.9,268.0 L1815.9,282.0 L1816.9,291.6 L1818.0,280.0 L1819.0,291.9 L1820.0,281.2 L1821.0,293.1 L1822.0,288.0 L1822.0,302 L1725.0,302Z" fill="#c9dbf8" stroke="none"/><path d="M1725.0,302.0 L1726.0,300.7 L1727.0,299.8 L1728.0,298.8 L1729.0,293.5 L1730.1,300.5 L1731.1,300.9 L1732.1,299.1 L1733.1,299.0 L1734.1,300.6 L1735.1,299.8 L1736.1,298.1 L1737.1,297.9 L1738.1,287.4 L1739.1,299.8 L1740.2,297.7 L1741.2,299.6 L1742.2,300.0 L1743.2,299.0 L1744.2,298.0 L1745.2,298.5 L1746.2,297.1 L1747.2,285.9 L1748.2,298.5 L1749.2,298.1 L1750.3,299.2 L1751.3,297.6 L1752.3,298.9 L1753.3,298.6 L1754.3,296.7 L1755.3,296.8 L1756.3,290.4 L1757.3,297.6 L1758.3,296.5 L1759.4,296.9 L1760.4,296.0 L1761.4,298.2 L1762.4,296.5 L1763.4,296.7 L1764.4,297.0 L1765.4,290.4 L1766.4,297.8 L1767.4,296.5 L1768.4,296.5 L1769.5,296.4 L1770.5,294.8 L1771.5,296.0 L1772.5,295.1 L1773.5,294.5 L1774.5,290.8 L1775.5,295.8 L1776.5,296.4 L1777.5,295.8 L1778.6,295.1 L1779.6,295.6 L1780.6,295.6 L1781.6,296.2 L1782.6,294.1 L1783.6,288.9 L1784.6,294.4 L1785.6,295.8 L1786.6,294.9 L1787.6,295.0 L1788.7,295.5 L1789.7,295.9 L1790.7,294.4 L1791.7,294.8 L1792.7,286.4 L1793.7,294.9 L1794.7,294.1 L1795.7,294.3 L1796.7,283.4 L1797.8,294.6 L1798.8,295.0 L1799.8,295.2 L1800.8,293.0 L1801.8,283.2 L1802.8,294.6 L1803.8,292.4 L1804.8,292.3 L1805.8,287.7 L1806.8,292.5 L1807.9,291.9 L1808.9,293.6 L1809.9,293.9 L1810.9,288.2 L1811.9,293.5 L1812.9,293.2 L1813.9,282.0 L1814.9,268.0 L1815.9,282.0 L1816.9,291.6 L1818.0,280.0 L1819.0,291.9 L1820.0,281.2 L1821.0,293.1 L1822.0,288.0" fill="none" stroke="#2e8b3d" stroke-width="1"/><circle cx="1725.0" cy="302.0" r="1.5" fill="#f7941d"/><circle cx="1814.9" cy="268.0" r="1.5" fill="#f7941d"/><circle cx="1822.0" cy="288.0" r="1.5" fill="#f7941d"/></svg>
<div class="pan" style="left:479px;top:374px;width:457px;height:277px"><div class="pt">Volume</div></div>
<svg class="abs" style="left:0;top:374px" width="960" height="280" viewBox="0 374 960 280" font-family="Liberation Sans, sans-serif">
<g stroke="#e4e6ea" stroke-width="1" fill="none"><path d="M538 460.500H924M538 538.500H924M538 614.500H924M538.500 460V614M568.500 460V614M697.500 460V614M825.500 460V614"/></g>
<path d="M538.0,614.2 L538.0,587.3 L539.1,593.9 L540.1,601.2 L541.2,604.7 L542.3,596.9 L543.4,587.3 L544.4,593.9 L545.5,601.2 L546.6,604.7 L547.6,596.9 L548.7,587.3 L549.8,593.9 L550.9,601.2 L551.9,604.7 L553.0,596.9 L554.1,587.3 L555.1,593.9 L556.2,601.2 L557.3,604.7 L558.3,596.9 L559.4,587.3 L560.5,593.9 L561.6,601.2 L562.6,604.7 L563.7,596.9 L564.8,587.3 L565.8,593.9 L566.9,601.2 L568.0,604.7 L569.1,596.9 L570.1,587.3 L571.2,593.9 L572.3,601.2 L573.3,604.7 L574.4,596.9 L575.5,587.3 L576.6,593.9 L577.6,601.2 L578.7,604.7 L579.8,596.9 L580.8,587.3 L581.9,593.9 L583.0,601.2 L584.1,604.7 L585.1,596.9 L586.2,587.3 L587.3,593.9 L588.3,601.2 L589.4,604.7 L590.5,590.3 L591.6,583.0 L592.6,588.8 L593.7,595.4 L594.8,599.0 L595.8,592.7 L596.9,584.6 L598.0,590.9 L599.0,598.2 L600.1,602.1 L601.2,596.2 L602.3,586.1 L603.3,593.3 L604.4,601.1 L605.5,604.7 L606.5,596.9 L607.6,587.3 L608.7,593.9 L609.8,601.2 L610.8,604.7 L611.9,596.9 L613.0,587.3 L614.0,593.9 L615.1,601.2 L616.2,604.7 L617.3,596.9 L618.3,587.3 L619.4,593.9 L620.5,601.2 L621.5,604.7 L622.6,596.9 L623.7,587.3 L624.8,593.9 L625.8,601.2 L626.9,604.7 L628.0,596.9 L629.0,587.3 L630.1,593.9 L631.2,601.2 L632.2,604.7 L633.3,596.9 L634.4,587.3 L635.5,593.9 L636.5,601.2 L637.6,604.7 L638.7,596.9 L639.7,587.3 L640.8,593.9 L641.9,601.2 L643.0,604.7 L644.0,596.9 L645.1,587.3 L646.2,593.9 L647.2,601.2 L648.3,604.7 L649.4,596.9 L650.5,587.3 L651.5,593.9 L652.6,601.2 L653.7,604.7 L654.7,590.3 L655.8,583.0 L656.9,588.8 L658.0,595.4 L659.0,599.0 L660.1,592.7 L661.2,584.6 L662.2,590.9 L663.3,598.2 L664.4,602.1 L665.5,596.2 L666.5,586.1 L667.6,593.3 L668.7,601.1 L669.7,604.7 L670.8,596.9 L671.9,587.3 L672.9,593.9 L674.0,601.2 L675.1,604.7 L676.2,596.9 L677.2,587.3 L678.3,593.9 L679.4,601.2 L680.4,604.7 L681.5,596.9 L682.6,587.3 L683.7,593.9 L684.7,601.2 L685.8,604.7 L686.9,596.9 L687.9,587.3 L689.0,593.9 L690.1,601.2 L691.2,604.7 L692.2,596.9 L693.3,587.3 L694.4,593.9 L695.4,601.2 L696.5,604.7 L697.6,596.9 L698.7,587.3 L699.7,593.9 L700.8,601.2 L701.9,604.7 L702.9,596.9 L704.0,587.3 L705.1,593.9 L706.2,601.2 L707.2,604.7 L708.3,596.9 L709.4,587.3 L710.4,593.9 L711.5,601.2 L712.6,604.7 L713.6,596.9 L714.7,587.3 L715.8,593.9 L716.9,578.1 L717.9,578.1 L719.0,578.1 L720.1,578.1 L721.1,578.1 L722.2,597.2 L723.3,596.2 L724.4,587.4 L725.4,582.2 L726.5,585.7 L727.6,596.4 L728.6,600.6 L729.7,591.3 L730.8,584.0 L731.9,586.5 L732.9,595.8 L734.0,595.0 L735.1,587.8 L736.1,581.5 L737.2,590.3 L738.3,593.9 L739.4,599.7 L740.4,591.4 L741.5,572.9 L742.6,588.1 L743.6,592.5 L744.7,599.4 L745.8,536.6 L746.8,484.4 L747.9,536.4 L749.0,593.0 L750.1,595.8 L751.1,588.4 L752.2,574.0 L753.3,571.2 L754.3,582.1 L755.4,598.2 L756.5,585.4 L757.6,576.4 L758.6,585.4 L759.7,593.1 L760.8,598.8 L761.8,586.3 L762.9,577.6 L764.0,583.3 L765.1,591.3 L766.1,599.8 L767.2,589.0 L768.3,575.7 L769.3,588.5 L770.4,597.1 L771.5,600.1 L772.6,587.1 L773.6,583.6 L774.7,586.2 L775.8,592.7 L776.8,600.5 L777.9,588.0 L779.0,572.3 L780.1,586.8 L781.1,591.5 L782.2,598.7 L783.3,591.5 L784.3,585.3 L785.4,586.9 L786.5,590.8 L787.5,600.5 L788.6,587.2 L789.7,580.0 L790.8,581.7 L791.8,593.4 L792.9,598.1 L794.0,589.9 L795.0,574.3 L796.1,582.4 L797.2,591.0 L798.3,599.4 L799.3,589.7 L800.4,582.0 L801.5,587.3 L802.5,592.8 L803.6,595.5 L804.7,588.5 L805.8,582.7 L806.8,582.9 L807.9,596.6 L809.0,600.3 L810.0,590.5 L811.1,578.1 L812.2,586.1 L813.3,579.2 L814.3,566.6 L815.4,576.8 L816.5,581.8 L817.5,581.5 L818.6,593.2 L819.7,594.1 L820.8,587.2 L821.8,574.9 L822.9,588.3 L824.0,591.4 L825.0,597.0 L826.1,585.9 L827.2,576.9 L828.2,588.9 L829.3,590.6 L830.4,600.6 L831.5,588.4 L832.5,575.8 L833.6,586.3 L834.7,592.9 L835.7,599.9 L836.8,588.6 L837.9,574.4 L839.0,583.8 L840.0,592.6 L841.1,600.7 L842.2,588.9 L843.2,573.3 L844.3,588.2 L845.4,582.6 L846.5,570.0 L847.5,557.4 L848.6,565.3 L849.7,578.0 L850.7,595.7 L851.8,600.2 L852.9,591.3 L854.0,577.5 L855.0,583.6 L856.1,597.2 L857.2,584.6 L858.2,573.0 L859.3,563.5 L860.4,570.0 L861.4,582.5 L862.5,594.3 L863.6,590.5 L864.7,573.9 L865.7,583.3 L866.8,592.7 L867.9,596.9 L868.9,586.7 L870.0,577.1 L871.1,585.1 L872.2,593.2 L873.2,598.0 L874.3,585.2 L875.4,577.4 L876.4,586.9 L877.5,595.0 L878.6,600.3 L879.7,591.5 L880.7,584.8 L881.8,587.1 L882.9,570.1 L883.9,546.1 L885.0,522.0 L886.1,539.8 L887.2,562.5 L888.2,591.9 L889.3,598.7 L890.4,586.5 L891.4,574.4 L892.5,589.3 L893.6,590.8 L894.7,540.4 L895.7,482.9 L896.8,532.9 L897.9,584.3 L898.9,590.6 L900.0,595.7 L901.1,589.1 L902.1,581.4 L903.2,586.7 L904.3,591.2 L905.4,600.4 L906.4,589.6 L907.5,585.2 L908.6,587.7 L909.6,591.1 L910.7,598.1 L911.8,588.7 L912.9,578.1 L913.9,584.2 L915.0,594.5 L915.0,614.2Z" fill="#4d93d8"/><path d="M538.0,614.2 L538.0,606.2 L539.1,608.8 L540.1,611.6 L541.2,613.0 L542.3,609.9 L543.4,606.2 L544.4,608.8 L545.5,611.6 L546.6,613.0 L547.6,609.9 L548.7,606.2 L549.8,608.8 L550.9,611.6 L551.9,613.0 L553.0,609.9 L554.1,606.2 L555.1,608.8 L556.2,611.6 L557.3,613.0 L558.3,609.9 L559.4,606.2 L560.5,608.8 L561.6,611.6 L562.6,613.0 L563.7,609.9 L564.8,606.2 L565.8,608.8 L566.9,611.6 L568.0,613.0 L569.1,609.9 L570.1,606.2 L571.2,608.8 L572.3,611.6 L573.3,613.0 L574.4,609.9 L575.5,606.2 L576.6,608.8 L577.6,611.6 L578.7,613.0 L579.8,609.9 L580.8,606.2 L581.9,608.8 L583.0,611.6 L584.1,613.0 L585.1,609.9 L586.2,606.2 L587.3,608.8 L588.3,611.6 L589.4,613.0 L590.5,605.8 L591.6,603.1 L592.6,605.4 L593.7,608.2 L594.8,609.9 L595.8,607.1 L596.9,603.1 L598.0,606.2 L599.0,610.0 L600.1,612.2 L601.2,608.5 L602.3,603.1 L603.3,608.8 L604.4,611.6 L605.5,613.0 L606.5,609.9 L607.6,606.2 L608.7,608.8 L609.8,611.6 L610.8,613.0 L611.9,609.9 L613.0,606.2 L614.0,608.8 L615.1,611.6 L616.2,613.0 L617.3,609.9 L618.3,606.2 L619.4,608.8 L620.5,611.6 L621.5,613.0 L622.6,609.9 L623.7,606.2 L624.8,608.8 L625.8,611.6 L626.9,613.0 L628.0,609.9 L629.0,606.2 L630.1,608.8 L631.2,611.6 L632.2,613.0 L633.3,609.9 L634.4,606.2 L635.5,608.8 L636.5,611.6 L637.6,613.0 L638.7,609.9 L639.7,606.2 L640.8,608.8 L641.9,611.6 L643.0,613.0 L644.0,609.9 L645.1,606.2 L646.2,608.8 L647.2,611.6 L648.3,613.0 L649.4,609.9 L650.5,606.2 L651.5,608.8 L652.6,611.6 L653.7,613.0 L654.7,605.8 L655.8,603.1 L656.9,605.4 L658.0,608.2 L659.0,609.9 L660.1,607.1 L661.2,603.1 L662.2,606.2 L663.3,610.0 L664.4,612.2 L665.5,608.5 L666.5,603.1 L667.6,608.8 L668.7,611.6 L669.7,613.0 L670.8,609.9 L671.9,606.2 L672.9,608.8 L674.0,611.6 L675.1,613.0 L676.2,609.9 L677.2,606.2 L678.3,608.8 L679.4,611.6 L680.4,613.0 L681.5,609.9 L682.6,606.2 L683.7,608.8 L684.7,611.6 L685.8,613.0 L686.9,609.9 L687.9,606.2 L689.0,608.8 L690.1,611.6 L691.2,613.0 L692.2,609.9 L693.3,606.2 L694.4,608.8 L695.4,611.6 L696.5,613.0 L697.6,609.9 L698.7,606.2 L699.7,608.8 L700.8,611.6 L701.9,613.0 L702.9,609.9 L704.0,606.2 L705.1,608.8 L706.2,611.6 L707.2,613.0 L708.3,609.9 L709.4,606.2 L710.4,608.8 L711.5,611.6 L712.6,613.0 L713.6,609.9 L714.7,606.2 L715.8,608.8 L716.9,603.4 L717.9,603.4 L719.0,603.4 L720.1,603.4 L721.1,603.4 L722.2,609.6 L723.3,611.8 L724.4,607.6 L725.4,606.3 L726.5,605.8 L727.6,609.3 L728.6,612.3 L729.7,608.6 L730.8,603.5 L731.9,607.1 L732.9,611.0 L734.0,612.4 L735.1,608.5 L736.1,605.3 L737.2,607.8 L738.3,610.1 L739.4,610.8 L740.4,608.2 L741.5,604.9 L742.6,607.0 L743.6,610.0 L744.7,611.4 L745.8,609.7 L746.8,605.1 L747.9,606.0 L749.0,611.6 L750.1,611.3 L751.1,608.2 L752.2,603.7 L753.3,606.4 L754.3,609.8 L755.4,612.8 L756.5,608.3 L757.6,603.3 L758.6,607.6 L759.7,610.4 L760.8,612.5 L761.8,608.1 L762.9,603.4 L764.0,608.1 L765.1,609.2 L766.1,612.4 L767.2,608.3 L768.3,606.4 L769.3,607.5 L770.4,609.9 L771.5,611.8 L772.6,607.4 L773.6,606.5 L774.7,607.5 L775.8,609.7 L776.8,612.6 L777.9,608.6 L779.0,604.7 L780.1,606.7 L781.1,609.8 L782.2,612.1 L783.3,608.0 L784.3,603.4 L785.4,608.1 L786.5,609.9 L787.5,612.2 L788.6,607.8 L789.7,601.1 L790.8,602.9 L791.8,604.8 L792.9,605.8 L794.0,603.7 L795.0,601.1 L796.1,602.9 L797.2,604.8 L798.3,605.8 L799.3,603.7 L800.4,601.1 L801.5,602.9 L802.5,604.8 L803.6,605.8 L804.7,603.7 L805.8,601.1 L806.8,602.9 L807.9,604.8 L809.0,605.8 L810.0,603.7 L811.1,601.1 L812.2,602.9 L813.3,604.8 L814.3,605.8 L815.4,603.7 L816.5,601.1 L817.5,602.9 L818.6,609.2 L819.7,610.8 L820.8,607.8 L821.8,606.2 L822.9,606.8 L824.0,610.0 L825.0,605.0 L826.1,602.2 L827.2,598.8 L828.2,601.2 L829.3,603.8 L830.4,605.0 L831.5,602.2 L832.5,598.8 L833.6,601.2 L834.7,603.8 L835.7,605.0 L836.8,602.2 L837.9,598.8 L839.0,601.2 L840.0,603.8 L841.1,605.0 L842.2,602.2 L843.2,598.8 L844.3,601.2 L845.4,603.8 L846.5,610.4 L847.5,609.6 L848.6,604.4 L849.7,607.1 L850.7,609.4 L851.8,611.0 L852.9,608.1 L854.0,604.4 L855.0,607.9 L856.1,609.9 L857.2,611.2 L858.2,608.5 L859.3,605.1 L860.4,605.8 L861.4,610.6 L862.5,612.0 L863.6,608.9 L864.7,601.9 L865.7,603.4 L866.8,605.0 L867.9,605.8 L868.9,604.0 L870.0,601.9 L871.1,603.4 L872.2,605.0 L873.2,605.8 L874.3,604.0 L875.4,601.9 L876.4,603.4 L877.5,605.0 L878.6,612.5 L879.7,608.4 L880.7,605.6 L881.8,603.1 L882.9,599.1 L883.9,594.0 L885.0,588.1 L886.1,592.2 L887.2,598.3 L888.2,600.5 L889.3,598.0 L890.4,591.2 L891.4,595.2 L892.5,602.6 L893.6,610.4 L894.7,610.8 L895.7,608.6 L896.8,605.3 L897.9,608.3 L898.9,611.2 L900.0,611.8 L901.1,608.8 L902.1,600.4 L903.2,603.3 L904.3,606.5 L905.4,608.1 L906.4,604.6 L907.5,600.4 L908.6,603.3 L909.6,606.5 L910.7,608.1 L911.8,604.6 L912.9,600.4 L913.9,603.3 L915.0,606.5 L915.0,614.2Z" fill="#ef7f58"/>
<path d="M873.500 460V614.500" stroke="#c4161c" stroke-width="1.200"/>
<circle cx="594" cy="437.700" r="6" fill="#e8541a"/><text class="lg" x="607.500" y="442">Sent: 14.36 G B</text><circle cx="713" cy="437.700" r="6" fill="#1976d2"/><text class="lg" x="726.500" y="442">Received: 42.09 G B</text>
<text class="ax" x="523.500" y="466" text-anchor="end">1 G B</text><text class="ax" x="523.500" y="542" text-anchor="end">500 M B</text><text class="ax" x="523.500" y="619" text-anchor="end">0 B</text>
<text class="ax" x="568.500" y="634" text-anchor="middle">04:00</text><text class="ax" x="697.500" y="634" text-anchor="middle">06:00</text><text class="ax" x="825.500" y="634" text-anchor="middle">08:00</text>
</svg>
<div class="pan" style="left:479px;top:666px;width:457px;height:290px"><div class="pt">TCP Errors</div></div>
<svg class="abs" style="left:0;top:666px" width="960" height="269" viewBox="0 666 960 269" font-family="Liberation Sans, sans-serif">
<g stroke="#e4e6ea" stroke-width="1" fill="none"><path d="M517 753.500H924M517 830.500H924M517 906.500H924M517.500 753V906M549.500 753V906M616.500 753V906M684.500 753V906M751.500 753V906M819.500 753V906M886.500 753V906"/></g>
<path d="M517.1,906.5V901.5M519.3,906.5V901.9M520.5,906.5V902.3M522.7,906.5V901.9M523.8,906.5V900.0M526.1,906.5V902.3M527.2,906.5V903.0M528.3,906.5V900.0M529.5,906.5V904.2M530.6,906.5V901.9M534.0,906.5V902.3M535.1,906.5V903.0M536.2,906.5V901.5M537.3,906.5V902.3M538.4,906.5V902.3M539.6,906.5V902.3M540.7,906.5V900.0M541.8,906.5V900.7M542.9,906.5V903.0M544.1,906.5V900.7M547.4,906.5V900.7M548.6,906.5V901.9M549.7,906.5V903.0M553.0,906.5V900.7M555.3,906.5V900.0M557.5,906.5V903.0M559.8,906.5V902.3M560.9,906.5V901.9M562.0,906.5V900.7M563.2,906.5V901.5M564.3,906.5V904.2M565.4,906.5V900.7M567.7,906.5V904.2M568.8,906.5V902.7M569.9,906.5V903.0M572.1,906.5V900.7M573.3,906.5V904.2M574.4,906.5V901.5M575.5,906.5V903.0M576.6,906.5V904.2M577.8,906.5V902.7M580.0,906.5V900.7M581.1,906.5V901.9M584.5,906.5V900.7M585.6,906.5V903.0M586.7,906.5V903.0M589.0,906.5V900.0M591.2,906.5V901.5M592.4,906.5V903.0M593.5,906.5V901.9M594.6,906.5V900.7M595.7,906.5V901.5M598.0,906.5V902.7M599.1,906.5V901.9M601.4,906.5V901.5M602.5,906.5V902.7M604.7,906.5V900.7M607.0,906.5V900.7M608.1,906.5V901.5M609.2,906.5V901.5M610.3,906.5V901.5M611.5,906.5V900.7M613.7,906.5V901.5M614.8,906.5V901.5M616.0,906.5V902.7M617.1,906.5V900.7M618.2,906.5V900.7M619.3,906.5V900.0M620.4,906.5V903.0M621.6,906.5V901.9M622.7,906.5V900.7M623.8,906.5V902.7M624.9,906.5V902.3M626.1,906.5V901.9M627.2,906.5V904.2M628.3,906.5V900.0M629.4,906.5V902.7M630.6,906.5V900.0M631.7,906.5V902.7M632.8,906.5V901.5M635.1,906.5V901.9M636.2,906.5V903.0M637.3,906.5V903.0M639.5,906.5V902.3M641.8,906.5V903.0M644.0,906.5V901.9M645.2,906.5V904.2M646.3,906.5V902.3M648.5,906.5V900.0M649.7,906.5V900.0M650.8,906.5V902.7M654.1,906.5V902.7M655.3,906.5V901.5M656.4,906.5V903.0M657.5,906.5V902.7M658.6,906.5V903.0M659.8,906.5V900.0M660.9,906.5V902.3M662.0,906.5V904.2M664.3,906.5V900.7M665.4,906.5V902.7M666.5,906.5V900.0M667.6,906.5V902.3M668.8,906.5V901.9M669.9,906.5V900.0M671.0,906.5V903.0M672.1,906.5V901.5M673.2,906.5V901.5M675.5,906.5V901.5M676.6,906.5V901.5M678.9,906.5V901.9M682.2,906.5V902.7M683.4,906.5V902.3M685.6,906.5V901.5M686.7,906.5V901.5M687.8,906.5V901.9M690.1,906.5V903.0M691.2,906.5V902.7M692.3,906.5V901.5M694.6,906.5V900.7M696.8,906.5V901.5M698.0,906.5V904.2M699.1,906.5V902.7M700.2,906.5V900.0M701.3,906.5V900.0M702.5,906.5V901.9M703.6,906.5V900.0M704.7,906.5V902.3M705.8,906.5V901.9M706.9,906.5V904.2M708.1,906.5V904.2M709.2,906.5V899.6M710.3,906.5V900.3M711.4,906.5V899.6M712.6,906.5V900.1M713.7,906.5V893.8M714.8,906.5V901.0M715.9,906.5V897.8M717.1,906.5V896.4M718.2,906.5V895.5M719.3,906.5V897.5M720.4,906.5V897.7M721.5,906.5V896.7M722.7,906.5V898.9M723.8,906.5V894.9M724.9,906.5V897.0M726.0,906.5V897.6M727.2,906.5V897.3M728.3,906.5V892.2M729.4,906.5V895.1M730.5,906.5V894.2M731.7,906.5V895.8M732.8,906.5V891.3M733.9,906.5V890.0M735.0,906.5V895.7M736.2,906.5V895.7M737.3,906.5V764.5M738.4,906.5V881.6M739.5,906.5V895.9M740.6,906.5V883.6M741.8,906.5V882.0M742.9,906.5V886.6M744.0,906.5V890.8M745.1,906.5V894.8M746.3,906.5V894.8M747.4,906.5V885.1M748.5,906.5V896.6M749.6,906.5V894.3M750.8,906.5V888.9M751.9,906.5V887.3M753.0,906.5V885.9M754.1,906.5V893.3M755.2,906.5V888.7M756.4,906.5V895.8M757.5,906.5V891.4M758.6,906.5V887.9M759.7,906.5V897.5M760.9,906.5V896.2M762.0,906.5V886.9M763.1,906.5V890.0M764.2,906.5V892.1M765.4,906.5V887.3M766.5,906.5V883.3M767.6,906.5V895.5M768.7,906.5V893.0M769.9,906.5V888.7M771.0,906.5V887.0M772.1,906.5V893.1M773.2,906.5V882.9M774.3,906.5V889.0M775.5,906.5V894.2M776.6,906.5V896.7M777.7,906.5V894.0M778.8,906.5V884.6M780.0,906.5V893.2M781.1,906.5V882.3M782.2,906.5V885.0M783.3,906.5V884.1M784.5,906.5V890.5M785.6,906.5V891.6M786.7,906.5V895.6M787.8,906.5V897.4M788.9,906.5V892.3M790.1,906.5V888.7M791.2,906.5V897.1M792.3,906.5V884.1M793.4,906.5V889.7M794.6,906.5V890.5M795.7,906.5V891.5M796.8,906.5V890.4M797.9,906.5V882.5M799.1,906.5V896.0M800.2,906.5V889.3M801.3,906.5V889.1M802.4,906.5V891.6M803.6,906.5V884.3M804.7,906.5V882.8M805.8,906.5V890.9M806.9,906.5V885.2M808.0,906.5V885.9M809.2,906.5V896.4M810.3,906.5V883.3M811.4,906.5V889.9M812.5,906.5V894.3M813.7,906.5V886.6M814.8,906.5V891.8M815.9,906.5V884.5M817.0,906.5V893.1M818.2,906.5V883.0M819.3,906.5V886.6M820.4,906.5V885.1M821.5,906.5V891.7M822.6,906.5V886.3M823.8,906.5V892.0M824.9,906.5V893.0M826.0,906.5V887.7M827.1,906.5V882.5M828.3,906.5V892.0M829.4,906.5V897.1M830.5,906.5V882.0M831.6,906.5V894.3M832.8,906.5V894.8M833.9,906.5V896.7M835.0,906.5V897.1M836.1,906.5V894.7M837.2,906.5V894.6M838.4,906.5V890.0M839.5,906.5V882.9M840.6,906.5V887.3M841.7,906.5V892.2M842.9,906.5V891.0M844.0,906.5V892.9M845.1,906.5V883.0M846.2,906.5V883.2M847.4,906.5V892.6M848.5,906.5V890.4M849.6,906.5V894.7M850.7,906.5V887.4M851.9,906.5V896.6M853.0,906.5V884.0M854.1,906.5V884.0M855.2,906.5V890.3M856.3,906.5V889.0M857.5,906.5V895.9M858.6,906.5V884.8M859.7,906.5V885.9M860.8,906.5V887.1M862.0,906.5V897.2M863.1,906.5V883.6M864.2,906.5V892.3M865.3,906.5V885.8M866.5,906.5V892.7M867.6,906.5V881.0M868.7,906.5V881.3M869.8,906.5V877.2M871.0,906.5V801.0M872.1,906.5V810.6M873.2,906.5V827.8M874.3,906.5V799.0M875.4,906.5V848.9M876.6,906.5V887.9M877.7,906.5V875.1M878.8,906.5V891.4M879.9,906.5V879.8M881.1,906.5V882.2M882.2,906.5V872.0M883.3,906.5V860.5M884.4,906.5V876.5M885.6,906.5V880.0M886.7,906.5V880.4M887.8,906.5V888.8M888.9,906.5V885.8M890.0,906.5V890.8M891.2,906.5V875.1M892.3,906.5V777.9M893.4,906.5V875.8M894.5,906.5V889.0M895.7,906.5V888.4M896.8,906.5V891.2M897.9,906.5V881.6M899.0,906.5V879.7M900.2,906.5V887.3M901.3,906.5V884.1M902.4,906.5V884.3M903.5,906.5V880.4M904.7,906.5V868.1M905.8,906.5V869.7M906.9,906.5V860.4M908.0,906.5V860.4M909.1,906.5V863.5M910.3,906.5V859.2M911.4,906.5V861.8M912.5,906.5V850.9M913.6,906.5V860.8M914.8,906.5V858.5M915.9,906.5V864.6" stroke="#f7b731" stroke-width="1.1" fill="none"/><path d="M576.5,906.5V904.2M624.0,906.5V896.9M643.6,906.5V904.2M651.5,906.5V901.1M712.4,906.5V903.8M780.0,906.5V904.6M847.7,906.5V903.4M881.5,906.5V903.0M899.0,906.5V903.0" stroke="#8b1a3a" stroke-width="1" fill="none"/>
<path d="M870.400 753V906.500" stroke="#c4161c" stroke-width="1.300"/>
<circle cx="539.200" cy="730.500" r="6" fill="#c2185b"/><text class="lg" x="552" y="735">Rejects: 603</text><circle cx="642.700" cy="730.500" r="6" fill="#7b1fa2"/><text class="lg" x="656" y="735">Resets: 3.11 K</text><circle cx="756.800" cy="730.500" r="6" fill="#f7b731"/><text class="lg" x="770" y="735">Retransmits: 112.98 K</text>
<text class="ax" x="502.500" y="758.500" text-anchor="end">4 K</text><text class="ax" x="502.500" y="834" text-anchor="end">2 K</text><text class="ax" x="502.500" y="911" text-anchor="end">0</text>
<text class="ax" x="549.5" y="926" text-anchor="middle">04:00</text>
<text class="ax" x="616.5" y="926" text-anchor="middle">05:00</text>
<text class="ax" x="684.5" y="926" text-anchor="middle">06:00</text>
<text class="ax" x="751.5" y="926" text-anchor="middle">07:00</text>
<text class="ax" x="819.5" y="926" text-anchor="middle">08:00</text>
<text class="ax" x="886.5" y="926" text-anchor="middle">09:00</text>
</svg>
<div class="pan" style="left:960px;top:374px;width:937px;height:600px"><div class="pt">Conversations</div></div>
<div id="map"><svg class="abs" style="left:0;top:0" width="935" height="520" viewBox="0 0 935 520">
<path d="M82.2,68.6 86.5,49.0 96.5,39.5 114.9,24.2 127.7,28.6 147.7,35.4 159.0,38.7 173.3,44.3 181.8,39.5 196.0,32.9 204.5,35.4 215.9,37.0 227.3,44.3 235.8,49.7 247.2,52.0 252.9,49.0 261.4,47.4 272.8,52.8 281.3,51.3 287.0,49.0 288.5,39.5 285.6,24.2 291.3,17.9 297.0,31.2 299.8,39.5 304.1,47.4 309.8,45.1 316.9,37.0 326.9,37.8 328.8,47.4 325.4,58.7 318.3,63.7 313.2,65.8 312.6,74.0 304.1,79.3 297.0,88.8 291.3,100.7 290.7,110.3 297.0,119.9 304.1,119.9 318.3,128.6 326.0,129.6 326.3,139.8 329.7,144.4 332.5,148.1 335.4,145.4 335.4,132.6 341.1,125.1 342.5,117.3 336.8,110.3 339.7,100.7 338.2,89.4 346.8,90.0 355.3,94.8 361.0,97.8 362.4,109.2 368.1,113.0 373.8,106.4 376.6,101.3 383.7,114.6 386.6,125.1 393.7,131.1 397.1,135.0 401.4,142.1 398.5,146.7 392.3,152.2 383.7,152.6 370.9,152.6 365.3,157.9 359.6,165.1 362.4,164.3 369.5,157.9 377.2,157.9 375.8,163.0 375.2,167.2 378.1,170.5 385.2,171.3 386.6,173.3 379.5,176.6 373.8,180.5 371.8,177.4 376.6,173.3 369.5,174.6 365.3,177.4 360.4,180.1 359.0,184.4 361.0,187.1 356.7,188.6 349.6,191.6 349.0,195.7 346.2,199.4 343.9,204.8 344.8,210.1 341.1,213.5 335.4,217.6 329.7,222.7 328.8,228.7 331.1,235.2 332.3,241.6 331.1,244.1 328.3,243.1 324.9,235.8 324.6,231.3 321.2,228.7 316.9,229.3 311.2,227.7 305.5,228.0 306.1,231.3 301.3,231.0 293.3,229.7 289.9,231.3 284.2,235.2 283.3,241.6 282.2,247.8 281.9,253.1 283.6,258.6 287.0,263.1 291.3,265.5 298.4,264.3 302.1,261.6 303.2,257.1 309.8,255.6 313.2,256.2 311.2,261.6 309.8,266.1 307.8,270.6 308.9,272.7 315.5,272.4 321.2,273.3 323.2,275.0 322.3,280.9 322.3,286.7 325.4,291.1 329.7,293.1 334.0,291.1 338.2,291.6 340.2,293.6 339.7,296.8 337.4,294.5 334.0,293.1 331.7,297.4 328.3,295.9 324.0,294.5 322.0,293.6 318.3,290.2 316.0,287.3 311.2,281.5 310.4,280.0 304.1,278.9 297.6,276.2 292.7,271.8 288.5,272.7 282.8,272.4 276.2,269.7 270.0,266.4 264.3,263.1 260.0,260.1 260.6,255.6 257.7,250.3 251.5,243.8 248.6,240.0 245.8,235.8 241.0,231.9 238.7,225.4 233.8,223.0 234.4,228.7 238.7,235.2 242.9,241.6 245.8,246.9 248.6,250.6 246.4,249.4 241.5,244.7 240.7,240.6 235.3,236.8 234.4,233.6 230.7,228.7 227.9,222.7 226.7,219.7 223.0,215.3 217.1,213.2 213.4,206.2 211.7,201.9 208.0,195.7 206.5,192.4 206.8,186.3 206.0,182.5 207.4,169.7 205.4,160.5 211.7,164.3 210.2,157.9 206.0,153.5 198.9,149.0 196.0,142.1 190.3,133.5 186.1,127.6 180.4,117.3 174.7,111.9 169.0,110.3 162.4,104.7 153.3,103.6 144.8,99.0 137.7,103.6 133.4,107.5 128.3,108.1 130.6,97.8 125.5,103.6 122.1,110.3 116.4,117.3 109.3,125.1 102.1,129.1 95.0,131.1 99.3,126.1 105.0,122.5 110.7,115.7 112.7,110.3 107.8,111.4 99.9,110.8 98.7,103.6 92.2,100.7 89.3,94.8 87.9,90.0 92.2,85.0 100.7,82.5 102.1,76.0 96.5,76.0 86.5,75.4ZM340.2,293.6 341.6,295.4 343.9,291.6 345.3,287.9 347.3,286.4 352.5,285.6 355.3,283.2 357.6,282.7 356.7,286.7 356.4,289.6 360.4,285.3 361.0,283.2 363.8,285.3 366.7,287.9 372.4,287.9 376.6,289.0 382.3,287.6 384.3,289.6 387.2,293.9 392.3,295.4 396.5,300.2 403.7,301.4 407.9,302.5 412.8,305.4 415.6,311.1 417.9,315.4 416.5,318.2 422.1,319.1 423.6,321.0 429.3,321.6 434.1,325.3 440.6,326.2 446.3,326.5 450.6,328.7 454.9,331.9 459.7,333.0 461.1,338.7 460.5,343.9 456.3,348.2 453.4,352.0 450.6,355.5 449.2,361.4 448.6,368.8 446.9,374.8 444.9,379.3 443.5,382.4 440.6,385.1 436.4,385.5 432.1,387.9 427.8,389.2 423.6,392.6 421.9,396.4 421.9,402.2 418.4,406.1 415.0,411.0 411.6,415.0 407.9,421.1 403.7,424.2 399.4,424.2 394.3,421.8 397.4,426.3 398.0,429.9 396.0,435.2 390.9,438.1 383.7,438.8 382.9,444.4 378.6,447.0 375.2,446.3 376.6,451.2 375.2,455.1 373.8,461.8 368.1,465.9 372.4,470.0 372.9,474.2 368.1,480.7 364.4,485.1 363.8,490.1 365.5,493.8 365.8,496.6 369.5,502.4 374.6,504.8 370.9,506.8 365.3,507.8 361.0,507.3 355.3,503.4 349.6,496.6 346.8,489.7 345.3,480.7 345.3,472.1 348.2,465.9 351.0,459.8 352.5,452.0 349.6,450.1 350.2,442.5 351.6,437.0 351.0,432.3 353.0,426.3 356.2,419.4 356.7,411.0 357.0,404.5 358.7,398.0 359.6,391.7 359.9,387.0 360.4,379.3 360.1,371.5 357.0,368.8 351.0,365.2 346.2,362.2 343.1,357.8 340.5,352.6 337.7,346.8 335.4,341.6 333.1,338.2 329.7,335.3 328.8,331.0 331.7,327.9 332.5,325.3 330.0,324.5 330.3,321.0 332.5,316.8 335.4,314.8 336.0,312.5 338.8,310.8 340.5,307.4 339.7,302.5 339.9,298.8 338.8,297.4 339.7,296.8ZM352.5,-51.7 366.7,-70.9 375.2,-96.1 389.4,-115.4 417.9,-125.9 446.3,-144.3 474.8,-149.3 497.5,-121.6 508.9,-96.1 526.0,-105.4 508.9,-78.8 510.3,-48.9 506.1,-29.6 503.2,-12.2 498.9,8.4 494.7,17.9 497.5,31.2 489.0,39.5 474.8,49.7 463.4,62.3 452.0,67.9 444.9,76.0 440.6,88.8 437.8,100.7 433.5,104.1 429.3,100.7 422.1,96.0 416.5,82.5 412.2,72.7 407.9,58.7 409.3,47.4 415.0,39.5 406.5,31.2 403.7,17.9 398.0,-1.6 392.3,-21.3 380.9,-27.2 366.7,-23.6 358.1,-38.3ZM385.2,60.9 378.1,69.3 375.2,79.3 366.7,65.8 375.2,85.7 376.1,91.8 370.9,91.8 365.3,81.2 372.4,92.4 362.4,96.6 355.3,90.6 348.2,76.0 338.2,76.0 339.7,69.3 349.6,72.7 352.5,62.3 351.0,51.3 341.1,39.5 332.5,35.4 318.3,35.4 306.9,26.8 304.1,13.2 306.9,0.5 318.3,0.5 329.7,3.5 338.2,8.4 343.9,10.4 355.3,22.4 365.3,32.9 369.5,43.5 375.2,52.8ZM227.3,35.4 238.7,41.9 252.9,46.6 262.9,45.1 271.4,41.1 270.0,31.2 264.3,26.8 261.4,10.4 252.9,5.5 235.8,3.5 224.5,13.2 221.6,22.4ZM204.5,17.9 210.2,25.1 218.8,22.4 224.5,8.4 227.3,-3.7 215.9,-6.8 206.0,0.5 203.1,13.2ZM312.6,69.3 318.3,65.8 324.0,72.7 329.7,79.3 328.3,82.5 322.6,79.3 318.3,84.4 312.6,81.9 315.5,74.7ZM277.1,43.5 284.2,37.0 288.5,43.5 282.8,47.4ZM275.7,19.7 284.2,19.7 285.6,8.4 281.3,-1.6 272.8,3.5 270.0,13.2ZM288.5,17.9 295.6,17.9 302.7,3.5 298.4,-3.7 288.5,0.5ZM391.4,163.9 393.7,157.9 396.5,151.3 400.8,146.7 402.2,146.3 401.4,152.2 399.4,154.4 403.7,155.7 407.9,156.6 409.3,160.0 409.3,164.3 410.2,166.4 407.9,168.0 405.1,166.4 401.4,166.8 399.4,164.3ZM195.2,149.9 201.7,151.3 206.0,155.7 209.1,160.5 206.0,160.0 201.7,157.0 197.4,153.5ZM181.8,134.0 185.5,135.0 186.9,143.1 183.8,139.8ZM120.6,117.3 126.9,114.6 126.3,118.9 122.1,121.0ZM71.7,83.1 76.5,81.2 80.0,83.8 75.7,85.7ZM84.2,102.4 87.9,101.3 88.8,104.1 85.6,104.7ZM376.6,153.9 383.7,156.1 384.3,157.4 379.5,156.6ZM377.2,167.6 383.2,168.4 382.3,170.5 378.6,169.7ZM318.6,254.3 324.0,250.9 328.3,250.6 334.0,252.5 339.7,254.9 345.3,258.0 349.0,259.5 346.8,260.4 339.1,260.7 341.1,258.6 336.8,257.1 331.1,254.0 326.9,252.8 322.6,253.4ZM348.5,264.6 352.5,260.4 356.2,260.7 361.0,261.0 365.5,264.3 362.4,265.2 358.1,265.5 356.2,267.0 352.5,265.5ZM337.4,265.2 343.1,265.5 342.5,266.7 337.7,266.1ZM369.0,264.9 373.2,264.9 372.9,266.1 369.0,266.1ZM384.0,287.6 386.6,287.3 386.6,289.3 384.0,289.3ZM337.4,244.4 338.8,244.4 339.4,247.2 337.7,246.6ZM386.6,489.7 392.3,488.7 395.7,490.1 392.3,493.3 388.0,492.9ZM452.0,501.4 457.7,502.9 457.1,505.3 452.6,503.4ZM491.0,68.6 496.1,63.0 503.2,65.8 510.3,64.4 514.6,62.3 518.3,67.2 521.4,72.7 517.4,77.3 508.9,82.5 501.8,81.9 496.1,79.9 497.5,76.0 491.8,73.4 497.5,70.7ZM116.4,259.5 119.2,260.7 117.8,263.1 116.4,261.6ZM114.4,257.1 116.4,257.4 115.5,258.3ZM110.1,255.3 111.5,255.6 110.7,256.2ZM105.8,253.4 107.0,253.7 106.4,254.3ZM543.3,209.0 554.4,211.5 560.1,209.0 568.6,205.5 580.0,204.8 588.5,203.7 591.4,205.1 590.0,210.1 589.1,215.3 592.8,218.0 597.1,219.0 603.6,221.0 605.6,224.7 611.3,227.4 617.0,226.0 617.0,221.0 622.7,219.0 628.4,222.0 631.8,223.4 638.3,224.7 644.0,225.7 648.3,223.7 652.0,224.7 655.4,225.0 657.7,224.4 659.4,230.3 657.7,235.8 654.8,232.6 652.8,228.7 652.5,230.3 655.4,235.2 656.8,240.0 659.7,246.3 661.6,250.9 665.1,254.0 666.2,260.1 666.8,264.6 669.9,267.6 672.5,273.6 676.7,276.5 681.0,280.9 683.3,282.4 683.0,285.3 686.7,288.2 690.9,287.3 696.6,286.1 702.3,284.7 706.0,283.8 705.7,288.2 703.7,292.5 700.9,298.2 698.1,304.0 693.8,309.7 689.5,312.5 683.8,317.3 679.6,321.0 676.7,323.9 674.4,326.7 672.5,331.0 671.0,335.3 672.5,338.2 672.2,343.9 675.0,348.2 675.6,355.5 675.9,361.4 672.5,365.8 666.8,368.8 663.4,372.7 659.7,376.3 660.8,382.4 661.1,388.6 655.4,392.6 653.1,394.8 653.4,399.6 651.7,403.8 648.3,407.7 645.4,412.0 641.2,417.1 636.9,419.8 633.2,421.1 626.9,421.5 622.7,421.8 617.0,423.9 612.7,422.2 611.9,417.7 611.9,414.4 609.3,407.7 607.0,403.2 603.3,398.0 602.2,391.7 601.3,385.5 598.5,379.3 595.7,373.3 593.7,368.8 593.7,364.3 595.1,358.4 598.5,354.0 599.4,349.7 597.6,343.9 596.5,338.2 594.8,335.3 594.2,332.4 591.4,329.0 588.0,325.3 585.7,321.0 586.6,317.3 587.7,313.9 587.7,309.7 587.1,307.1 585.1,305.4 582.9,305.4 580.0,305.7 577.2,306.0 574.3,302.5 572.0,300.2 568.6,300.0 564.4,300.5 560.1,302.0 555.8,304.0 553.0,304.2 548.7,303.4 543.0,304.5 538.8,305.7 534.5,304.0 530.2,300.5 527.4,298.2 523.7,295.9 522.3,292.5 520.3,289.6 517.4,286.7 514.6,283.8 512.3,280.9 511.7,278.0 510.3,275.9 512.6,272.1 513.7,266.1 514.0,261.6 511.7,257.1 513.2,252.5 515.2,247.8 518.0,243.1 521.7,238.4 523.1,235.8 527.4,233.6 531.7,230.3 532.5,227.0 532.2,223.7 534.5,219.7 538.8,216.6 541.0,214.6ZM700.3,352.6 703.2,361.4 702.3,364.3 700.9,368.8 699.5,374.8 697.5,382.4 694.4,391.1 689.5,393.3 685.3,391.7 683.8,385.5 683.3,380.8 686.1,376.3 685.3,370.3 686.1,365.2 690.9,363.4 695.2,359.9 698.1,356.4ZM534.5,204.8 535.1,199.4 533.1,198.3 535.1,192.0 535.1,186.3 533.6,182.5 537.3,179.7 543.0,180.1 550.1,180.5 555.0,180.9 556.4,176.6 557.0,171.3 553.8,166.4 547.3,163.0 546.4,160.5 551.6,158.7 555.5,159.2 555.0,154.8 556.7,156.1 560.7,155.7 564.4,153.0 564.7,149.5 568.6,147.7 571.5,144.4 573.5,139.8 577.2,137.9 580.0,136.9 584.3,136.4 585.1,132.6 583.4,127.6 583.1,119.9 587.1,118.9 590.3,116.2 589.4,122.5 590.8,124.0 588.5,128.6 588.0,131.1 591.4,133.5 595.7,133.0 600.5,135.5 605.6,133.5 612.7,131.1 616.4,133.0 619.8,129.1 619.8,121.0 622.7,116.8 626.9,119.9 629.2,115.7 626.9,110.3 626.9,108.1 631.2,106.4 639.7,105.8 646.0,104.1 641.2,100.7 634.1,101.3 629.8,103.6 624.1,103.6 620.7,97.8 620.7,88.8 624.1,82.5 629.8,74.0 632.1,69.3 628.4,67.2 623.5,67.9 620.7,76.0 618.4,81.2 612.7,85.7 609.3,94.8 609.0,100.7 613.6,104.7 611.3,109.2 607.6,114.6 606.5,122.0 605.0,124.6 600.8,127.6 597.1,128.1 596.2,124.0 593.7,117.3 592.0,109.2 590.3,106.4 587.1,110.3 582.9,114.1 578.6,114.1 575.7,109.2 574.3,100.7 574.3,91.8 578.6,86.9 584.3,82.5 590.0,79.3 592.8,72.7 595.7,65.8 599.9,56.5 604.2,49.0 609.9,41.9 614.1,37.0 621.3,33.7 626.9,29.4 633.2,26.0 639.7,26.8 648.3,32.0 642.6,37.0 651.1,37.0 655.4,41.1 663.9,43.5 673.9,51.3 677.6,58.7 675.3,63.7 668.2,65.1 659.7,62.3 654.0,60.1 658.2,69.3 659.7,77.3 665.3,79.3 668.2,75.4 675.3,75.4 673.9,67.9 679.6,62.3 685.3,63.7 685.3,49.0 690.9,49.7 692.4,58.7 696.6,53.5 705.2,48.2 713.7,49.0 722.2,47.4 730.8,43.5 733.6,37.0 742.1,41.1 750.7,45.1 754.9,43.5 750.7,35.4 750.7,22.4 756.4,10.4 764.9,8.4 767.7,22.4 766.3,39.5 769.2,55.0 764.9,63.7 770.6,58.7 773.4,47.4 770.6,26.8 773.4,13.2 782.0,16.0 790.5,17.9 790.5,2.5 807.6,-6.8 807.6,-23.6 844.5,-35.8 858.8,-42.2 881.5,-23.6 881.5,0.5 873.0,-1.6 881.5,3.5 895.7,5.5 910.0,3.5 921.3,13.2 929.9,22.4 938.4,22.4 949.8,22.4 958.3,12.3 972.5,15.1 986.8,20.6 995.3,26.8 1009.5,26.8 1015.2,37.0 1029.4,38.7 1043.7,37.0 1046.5,35.4 1060.7,37.0 1072.1,43.5 1083.5,55.0 1094.9,60.1 1101.4,65.1 1094.9,74.0 1090.6,76.0 1082.1,69.3 1076.4,65.8 1069.3,74.0 1065.0,74.7 1070.7,88.8 1057.9,93.0 1049.3,99.0 1043.7,103.6 1032.3,103.6 1028.0,104.7 1023.7,114.6 1020.9,116.2 1024.3,124.0 1020.9,131.1 1015.2,138.8 1010.4,144.4 1005.8,149.0 1003.3,139.8 1003.3,127.6 1005.3,119.9 1010.9,111.9 1016.6,103.6 1023.7,94.8 1026.6,88.8 1015.2,93.0 1006.7,94.2 1001.0,104.7 992.5,109.2 983.9,106.4 972.5,107.5 965.4,109.2 958.3,117.3 951.2,130.1 949.8,135.0 956.9,134.0 961.2,139.8 959.7,149.0 959.7,157.9 955.5,165.1 951.2,172.5 945.5,178.5 938.4,183.2 932.7,184.0 931.3,185.2 929.0,190.1 924.2,193.9 922.8,196.5 925.6,199.4 928.2,204.8 928.5,210.1 927.0,211.5 922.8,212.8 919.4,213.5 919.9,208.3 920.5,204.8 917.1,201.9 915.7,198.6 916.5,195.7 913.7,193.9 908.5,195.7 905.7,198.3 906.6,192.0 904.3,190.5 899.4,195.7 895.2,197.6 897.2,201.2 898.6,203.7 903.7,201.9 908.5,203.7 904.3,206.5 900.0,210.8 902.3,215.3 904.3,220.4 907.1,223.7 905.7,227.0 907.1,229.3 905.7,233.6 902.9,236.8 900.6,241.6 897.2,245.7 892.9,249.4 887.2,251.9 884.4,253.1 880.1,254.6 875.8,255.9 873.8,259.2 872.4,255.9 868.7,254.9 865.9,256.5 863.3,259.2 861.0,263.1 863.0,266.7 865.9,270.6 869.3,273.6 871.0,279.4 871.0,283.8 867.3,286.7 864.5,288.5 863.0,290.2 859.6,293.4 858.5,290.2 856.8,288.2 853.9,287.3 852.2,284.4 848.8,281.8 847.1,279.4 844.5,280.0 844.3,285.3 842.6,291.1 844.5,293.9 846.0,297.7 848.8,298.8 851.7,301.1 854.2,305.4 854.5,310.2 856.5,314.2 854.2,314.2 850.2,311.7 848.2,309.7 846.0,305.4 845.4,301.1 843.1,297.4 839.7,295.4 840.3,289.6 840.8,283.8 838.9,278.0 837.7,272.1 836.0,269.1 833.2,270.6 830.9,272.7 828.3,271.5 828.9,266.1 826.6,261.6 823.2,257.7 821.8,254.6 820.4,252.2 817.5,253.4 813.3,254.6 809.0,255.3 807.0,258.6 804.2,260.7 800.5,263.7 797.0,267.0 793.3,270.6 790.5,272.4 788.2,275.0 788.2,280.6 787.1,285.3 787.1,288.7 784.8,291.6 782.5,292.8 780.5,295.1 777.7,292.5 776.3,288.2 774.3,283.8 772.6,279.4 771.2,275.0 768.6,269.1 767.2,263.1 766.9,258.6 766.6,255.6 765.5,257.1 762.1,257.7 759.2,255.6 756.4,253.1 759.8,250.9 754.9,249.4 752.1,247.8 750.7,245.0 749.3,243.5 743.6,244.1 736.5,244.1 732.2,243.8 727.4,243.1 723.1,242.2 721.7,238.4 716.5,239.3 712.3,239.0 709.4,236.5 705.2,232.6 703.7,229.3 700.9,228.0 698.9,228.7 696.6,230.3 698.1,234.2 700.9,237.4 702.9,240.0 704.6,243.1 706.0,241.3 706.9,244.7 706.0,246.9 709.4,247.5 713.7,247.2 717.4,243.8 719.7,240.9 720.8,245.3 723.7,248.5 726.8,249.1 730.2,252.5 727.4,257.7 724.5,261.6 722.2,264.6 718.0,267.3 713.7,269.1 709.4,271.2 705.2,274.2 699.5,277.1 695.2,279.1 688.1,281.5 683.8,281.8 682.4,279.4 681.8,275.0 681.3,270.6 679.0,266.1 676.2,261.6 672.5,257.7 671.3,255.6 670.5,250.9 666.8,246.3 664.8,241.6 661.1,236.8 659.7,234.5 659.4,230.3 657.7,224.4 659.1,221.0 660.2,217.0 661.9,212.5 662.5,208.3 663.1,205.5 658.8,205.8 654.0,208.0 648.3,205.5 644.0,207.3 639.7,205.5 637.8,203.0 635.5,199.4 635.5,195.7 634.6,193.5 638.3,192.0 644.0,191.3 642.6,189.7 648.3,189.4 654.0,186.3 660.2,186.3 665.3,189.4 672.5,190.1 678.1,187.9 677.6,183.2 672.5,179.7 668.2,176.6 665.3,173.8 668.2,170.5 671.6,166.0 666.8,166.4 661.1,168.4 659.7,171.7 663.9,173.3 660.5,175.0 655.7,177.0 652.8,172.5 655.4,170.1 651.1,168.9 647.7,168.4 644.6,173.3 641.7,177.8 639.7,181.7 639.2,185.2 640.3,188.2 642.6,189.7 638.3,190.5 634.6,191.6 631.2,190.5 628.4,191.3 626.9,193.1 625.0,192.4 625.0,195.7 626.1,197.6 628.4,201.2 625.5,203.0 626.1,206.5 624.1,206.5 621.8,205.1 620.7,201.9 620.7,200.1 618.4,195.7 615.6,192.0 615.6,187.5 612.7,184.4 607.0,180.5 602.8,176.6 600.8,173.3 598.8,174.6 599.1,171.7 595.4,172.9 595.1,177.4 598.8,180.5 601.3,185.2 605.6,186.7 608.5,190.1 612.7,193.5 608.5,192.4 607.3,195.7 608.7,197.6 606.2,201.2 604.8,200.8 605.6,197.6 604.2,193.9 601.3,191.3 597.1,189.4 594.8,187.1 591.4,184.4 589.4,180.5 588.0,178.2 585.1,177.0 581.4,179.3 577.2,182.1 573.8,180.9 570.1,181.3 568.6,184.4 569.2,186.7 566.4,188.6 562.4,190.9 559.2,195.7 560.4,198.3 558.1,201.9 555.0,204.8 553.0,205.8 547.6,205.8 544.7,208.0 542.5,206.5 540.2,204.1 537.3,204.8ZM543.9,153.0 547.3,149.0 551.6,148.1 552.4,146.3 549.3,146.3 545.3,145.8 548.2,143.1 548.4,140.2 546.7,138.3 551.3,138.3 551.6,135.0 550.1,132.1 550.1,130.6 545.9,131.6 546.4,127.1 544.2,128.1 543.9,122.5 542.5,119.9 543.6,115.7 545.9,111.4 551.6,111.4 548.7,116.8 554.4,116.2 554.4,119.9 552.1,123.5 551.0,125.1 554.4,126.1 555.8,130.1 559.5,134.0 560.4,137.4 561.0,139.8 564.9,141.2 564.7,144.4 562.4,146.7 564.1,148.1 561.0,150.4 556.7,150.4 553.0,150.8 550.1,151.7 548.2,152.2 545.3,153.5ZM531.7,146.3 530.8,143.5 533.1,141.7 532.2,137.9 531.7,134.0 535.9,132.6 536.5,129.1 539.3,128.6 543.0,129.1 544.5,132.6 543.0,135.0 542.7,138.3 542.5,143.1 540.2,144.0 536.5,145.4 533.1,146.7ZM591.4,126.6 595.9,125.1 595.7,129.1 592.2,129.1ZM588.0,127.6 590.8,127.6 590.5,130.1 588.5,129.6ZM611.6,118.3 614.1,115.2 613.6,118.3 611.9,120.4ZM606.7,124.0 608.7,118.3 608.2,122.5ZM622.1,111.9 625.5,111.4 625.0,113.5 622.7,114.6ZM538.8,118.9 542.5,111.9 541.6,114.6 539.6,116.8ZM539.1,90.0 541.6,90.0 540.8,94.8ZM555.5,99.5 557.5,99.5 556.4,104.1ZM595.4,201.2 597.9,200.5 604.5,200.1 603.1,204.8 602.8,205.8 600.8,205.1 595.7,202.6ZM583.4,190.5 586.3,189.4 588.0,192.0 587.4,196.8 585.7,197.2 584.0,197.6 584.3,193.9ZM584.6,184.8 586.8,182.5 587.1,186.3 586.3,188.6 584.8,187.5ZM626.9,210.1 631.2,210.4 634.9,211.1 631.2,212.2 627.2,211.1ZM652.0,211.8 654.0,210.4 658.5,209.4 656.8,211.8 654.0,213.2 652.3,212.8ZM566.9,195.3 569.2,194.2 569.8,195.7 568.1,196.5ZM626.1,197.9 629.8,200.5 628.9,201.2 626.7,199.0ZM638.9,207.6 640.3,206.9 640.0,208.3ZM633.8,196.8 635.8,196.5 635.2,197.6ZM706.6,22.4 710.9,29.4 716.5,31.2 723.9,31.2 725.1,24.2 720.8,15.1 722.2,6.5 726.5,-1.6 733.6,-12.2 753.5,-29.6 747.8,-35.8 730.8,-27.2 718.0,-14.5 712.3,0.5 708.0,11.3ZM697.5,43.5 700.9,39.5 703.2,43.5 699.5,45.9ZM726.5,33.7 731.6,32.9 729.3,37.8ZM787.1,290.8 788.5,291.1 791.1,293.9 792.8,297.4 791.9,300.0 789.1,301.4 787.4,299.7 787.1,295.4ZM711.7,282.1 715.1,282.1 714.8,282.9 712.3,282.9ZM869.3,262.5 871.6,260.1 875.3,260.1 875.8,261.6 873.8,264.3 871.6,265.5 869.3,264.3ZM901.7,250.9 904.3,244.7 906.6,244.7 905.7,249.4 903.7,254.0 902.0,252.2ZM929.0,217.6 932.2,215.6 934.7,216.6 935.6,219.3 934.1,223.7 931.9,225.4 930.4,224.4 930.4,220.4ZM932.4,215.3 937.0,210.4 946.9,209.4 949.8,203.0 955.5,201.2 958.3,193.9 962.0,188.6 962.6,197.6 961.2,201.2 960.6,208.3 958.3,211.8 954.1,212.8 949.8,213.2 945.5,217.0 944.1,213.2 938.4,214.2 935.6,215.3ZM919.1,217.3 921.1,217.0 920.2,218.0ZM902.3,272.1 902.9,264.6 906.6,264.6 908.0,269.1 905.7,273.6 906.6,277.4 910.0,278.0 912.8,281.5 910.8,280.9 907.1,278.6 903.4,278.6 903.1,276.5 901.4,275.0ZM907.1,298.2 911.4,293.6 917.1,290.5 919.9,295.4 919.1,299.7 917.1,302.0 914.2,300.2 912.8,297.4ZM915.7,282.4 917.6,286.1 915.7,289.0 913.7,285.8ZM907.1,284.4 910.5,286.7 910.5,291.6 908.5,290.8 907.1,288.2ZM893.5,294.2 900.0,285.8 899.4,288.7 894.6,294.5ZM902.6,279.7 905.7,280.3 904.8,282.9ZM831.2,302.2 837.4,303.4 840.8,307.4 846.0,311.9 850.2,315.4 854.5,318.2 857.3,323.3 861.6,326.7 861.0,334.7 857.3,334.7 851.1,329.6 846.0,322.5 841.7,317.3 840.3,313.4 836.0,308.8 831.7,304.5ZM859.3,336.7 862.2,335.3 868.7,337.0 875.3,336.4 880.7,338.2 885.8,340.5 885.2,342.8 877.3,341.9 868.7,340.5 863.0,339.0 859.3,337.6ZM871.0,316.8 870.1,313.1 874.4,313.1 876.7,311.1 881.5,309.1 885.8,304.8 888.6,302.5 892.3,298.2 894.9,300.2 899.2,303.4 895.7,306.2 894.9,311.1 898.0,315.4 894.9,317.3 894.3,320.5 891.5,323.9 890.6,329.0 886.4,329.6 881.5,327.3 877.8,327.6 873.6,325.3 873.0,321.9 871.0,319.6ZM900.9,315.9 904.0,314.5 911.4,315.6 916.2,313.6 913.7,317.1 905.7,316.8 902.0,320.8 906.0,320.5 910.8,320.2 907.7,323.3 906.3,323.9 908.5,327.3 910.0,331.0 907.1,331.9 905.1,327.6 902.6,326.7 902.6,334.2 900.0,333.9 900.0,328.2 898.0,326.2 899.4,321.6ZM886.1,341.3 892.0,341.9 898.6,341.9 904.3,342.2 910.0,341.9 909.4,343.0 901.4,343.6 892.9,343.9 887.2,343.3ZM898.6,345.3 903.7,346.5 902.0,347.7 899.2,346.2ZM911.4,347.7 915.7,343.9 921.3,342.2 919.9,344.5 912.8,347.4ZM922.8,313.1 926.2,313.9 925.6,317.3 924.2,320.5 923.1,316.8ZM924.2,326.7 932.2,327.3 927.0,328.2ZM918.5,327.3 921.9,327.9 919.9,329.0ZM859.3,322.8 863.6,325.3 862.2,326.7 860.2,324.5ZM836.3,314.2 838.6,316.5 837.4,316.2ZM840.6,321.0 842.6,323.3 841.4,323.0ZM823.8,279.4 824.9,283.8 823.5,285.0 823.2,282.4ZM884.9,381.8 888.6,378.7 892.9,378.1 898.6,376.3 904.3,374.8 907.7,370.3 908.0,367.3 911.7,368.2 914.2,364.3 917.1,359.9 921.3,358.1 925.0,360.8 928.5,361.1 929.9,357.0 932.2,353.7 937.0,353.2 937.3,350.8 944.1,353.2 949.2,353.2 946.9,357.0 945.5,361.4 951.2,364.3 956.9,368.8 960.6,368.8 962.6,362.8 963.2,355.5 965.4,349.1 968.3,354.0 969.1,359.3 973.4,361.4 975.4,368.8 976.2,373.3 982.5,376.9 985.3,382.4 989.0,387.0 993.9,391.7 995.9,398.0 996.7,402.8 995.3,409.4 993.9,415.4 990.5,420.5 987.6,427.4 986.8,432.7 981.1,434.9 976.2,438.8 972.0,435.9 968.3,438.1 962.6,436.3 958.3,433.4 956.9,428.1 954.1,426.3 954.1,423.9 952.1,417.7 949.2,421.8 946.4,423.9 944.1,419.4 941.3,416.0 935.6,414.4 932.7,412.7 927.0,413.4 918.5,415.4 912.8,417.7 911.4,420.8 904.3,420.8 900.0,422.5 895.7,424.6 890.1,423.9 887.2,422.2 887.8,419.4 889.2,414.4 887.2,408.7 885.8,402.8 883.8,396.4 882.7,391.7 883.5,387.0 883.5,383.9ZM755.8,478.5 760.1,479.0 759.8,481.2 756.4,481.2ZM717.4,379.0 718.8,379.3 718.3,380.2ZM723.4,376.6 724.5,376.9 723.7,377.8ZM683.3,351.1 683.8,352.3 683.0,352.0ZM671.6,334.7 672.5,336.2 671.6,336.4ZM512.0,233.9 514.3,233.6 513.2,235.2ZM515.2,234.9 516.3,234.9 515.7,235.8ZM519.4,233.2 521.7,231.3 520.6,234.2ZM511.2,219.3 512.6,219.3 512.0,220.0ZM486.7,201.9 488.4,201.9 487.6,202.3ZM492.7,274.4 493.5,275.0 493.0,275.3ZM584.3,307.7 585.4,308.0 584.6,308.8ZM578.6,317.1 579.2,317.6 578.6,317.9ZM-489.5,204.8 -488.9,199.4 -490.9,198.3 -488.9,192.0 -488.9,186.3 -490.4,182.5 -486.7,179.7 -481.0,180.1 -473.9,180.5 -469.0,180.9 -467.6,176.6 -467.0,171.3 -470.2,166.4 -476.7,163.0 -477.6,160.5 -472.4,158.7 -468.5,159.2 -469.0,154.8 -467.3,156.1 -463.3,155.7 -459.6,153.0 -459.3,149.5 -455.4,147.7 -452.5,144.4 -450.5,139.8 -446.8,137.9 -444.0,136.9 -439.7,136.4 -438.9,132.6 -440.6,127.6 -440.9,119.9 -436.9,118.9 -433.7,116.2 -434.6,122.5 -433.2,124.0 -435.5,128.6 -436.0,131.1 -432.6,133.5 -428.3,133.0 -423.5,135.5 -418.4,133.5 -411.3,131.1 -407.6,133.0 -404.2,129.1 -404.2,121.0 -401.3,116.8 -397.1,119.9 -394.8,115.7 -397.1,110.3 -397.1,108.1 -392.8,106.4 -384.3,105.8 -378.0,104.1 -382.8,100.7 -389.9,101.3 -394.2,103.6 -399.9,103.6 -403.3,97.8 -403.3,88.8 -399.9,82.5 -394.2,74.0 -391.9,69.3 -395.6,67.2 -400.5,67.9 -403.3,76.0 -405.6,81.2 -411.3,85.7 -414.7,94.8 -415.0,100.7 -410.4,104.7 -412.7,109.2 -416.4,114.6 -417.5,122.0 -419.0,124.6 -423.2,127.6 -426.9,128.1 -427.8,124.0 -430.3,117.3 -432.0,109.2 -433.7,106.4 -436.9,110.3 -441.1,114.1 -445.4,114.1 -448.3,109.2 -449.7,100.7 -449.7,91.8 -445.4,86.9 -439.7,82.5 -434.0,79.3 -431.2,72.7 -428.3,65.8 -424.1,56.5 -419.8,49.0 -414.1,41.9 -409.9,37.0 -402.7,33.7 -397.1,29.4 -390.8,26.0 -384.3,26.8 -375.7,32.0 -381.4,37.0 -372.9,37.0 -368.6,41.1 -360.1,43.5 -350.1,51.3 -346.4,58.7 -348.7,63.7 -355.8,65.1 -364.3,62.3 -370.0,60.1 -365.8,69.3 -364.3,77.3 -358.7,79.3 -355.8,75.4 -348.7,75.4 -350.1,67.9 -344.4,62.3 -338.7,63.7 -338.7,49.0 -333.1,49.7 -331.6,58.7 -327.4,53.5 -318.8,48.2 -310.3,49.0 -301.8,47.4 -293.2,43.5 -290.4,37.0 -281.9,41.1 -273.3,45.1 -269.1,43.5 -273.3,35.4 -273.3,22.4 -267.6,10.4 -259.1,8.4 -256.3,22.4 -257.7,39.5 -254.8,55.0 -259.1,63.7 -253.4,58.7 -250.6,47.4 -253.4,26.8 -250.6,13.2 -242.0,16.0 -233.5,17.9 -233.5,2.5 -216.4,-6.8 -216.4,-23.6 -179.5,-35.8 -165.2,-42.2 -142.5,-23.6 -142.5,0.5 -151.0,-1.6 -142.5,3.5 -128.3,5.5 -114.0,3.5 -102.7,13.2 -94.1,22.4 -85.6,22.4 -74.2,22.4 -65.7,12.3 -51.5,15.1 -37.2,20.6 -28.7,26.8 -14.5,26.8 -8.8,37.0 5.4,38.7 19.7,37.0 22.5,35.4 36.7,37.0 48.1,43.5 59.5,55.0 70.9,60.1 77.4,65.1 70.9,74.0 66.6,76.0 58.1,69.3 52.4,65.8 45.3,74.0 41.0,74.7 46.7,88.8 33.9,93.0 25.3,99.0 19.7,103.6 8.3,103.6 4.0,104.7 -0.3,114.6 -3.1,116.2 0.3,124.0 -3.1,131.1 -8.8,138.8 -13.6,144.4 -18.2,149.0 -20.7,139.8 -20.7,127.6 -18.7,119.9 -13.1,111.9 -7.4,103.6 -0.3,94.8 2.6,88.8 -8.8,93.0 -17.3,94.2 -23.0,104.7 -31.5,109.2 -40.1,106.4 -51.5,107.5 -58.6,109.2 -65.7,117.3 -72.8,130.1 -74.2,135.0 -67.1,134.0 -62.8,139.8 -64.3,149.0 -64.3,157.9 -68.5,165.1 -72.8,172.5 -78.5,178.5 -85.6,183.2 -91.3,184.0 -92.7,185.2 -95.0,190.1 -99.8,193.9 -101.2,196.5 -98.4,199.4 -95.8,204.8 -95.5,210.1 -97.0,211.5 -101.2,212.8 -104.6,213.5 -104.1,208.3 -103.5,204.8 -106.9,201.9 -108.3,198.6 -107.5,195.7 -110.3,193.9 -115.5,195.7 -118.3,198.3 -117.4,192.0 -119.7,190.5 -124.6,195.7 -128.8,197.6 -126.8,201.2 -125.4,203.7 -120.3,201.9 -115.5,203.7 -119.7,206.5 -124.0,210.8 -121.7,215.3 -119.7,220.4 -116.9,223.7 -118.3,227.0 -116.9,229.3 -118.3,233.6 -121.1,236.8 -123.4,241.6 -126.8,245.7 -131.1,249.4 -136.8,251.9 -139.6,253.1 -143.9,254.6 -148.2,255.9 -150.2,259.2 -151.6,255.9 -155.3,254.9 -158.1,256.5 -160.7,259.2 -163.0,263.1 -161.0,266.7 -158.1,270.6 -154.7,273.6 -153.0,279.4 -153.0,283.8 -156.7,286.7 -159.5,288.5 -161.0,290.2 -164.4,293.4 -165.5,290.2 -167.2,288.2 -170.1,287.3 -171.8,284.4 -175.2,281.8 -176.9,279.4 -179.5,280.0 -179.7,285.3 -181.4,291.1 -179.5,293.9 -178.0,297.7 -175.2,298.8 -172.3,301.1 -169.8,305.4 -169.5,310.2 -167.5,314.2 -169.8,314.2 -173.8,311.7 -175.8,309.7 -178.0,305.4 -178.6,301.1 -180.9,297.4 -184.3,295.4 -183.7,289.6 -183.2,283.8 -185.1,278.0 -186.3,272.1 -188.0,269.1 -190.8,270.6 -193.1,272.7 -195.7,271.5 -195.1,266.1 -197.4,261.6 -200.8,257.7 -202.2,254.6 -203.6,252.2 -206.5,253.4 -210.7,254.6 -215.0,255.3 -217.0,258.6 -219.8,260.7 -223.5,263.7 -227.0,267.0 -230.7,270.6 -233.5,272.4 -235.8,275.0 -235.8,280.6 -236.9,285.3 -236.9,288.7 -239.2,291.6 -241.5,292.8 -243.5,295.1 -246.3,292.5 -247.7,288.2 -249.7,283.8 -251.4,279.4 -252.8,275.0 -255.4,269.1 -256.8,263.1 -257.1,258.6 -257.4,255.6 -258.5,257.1 -261.9,257.7 -264.8,255.6 -267.6,253.1 -264.2,250.9 -269.1,249.4 -271.9,247.8 -273.3,245.0 -274.7,243.5 -280.4,244.1 -287.5,244.1 -291.8,243.8 -296.6,243.1 -300.9,242.2 -302.3,238.4 -307.5,239.3 -311.7,239.0 -314.6,236.5 -318.8,232.6 -320.3,229.3 -323.1,228.0 -325.1,228.7 -327.4,230.3 -325.9,234.2 -323.1,237.4 -321.1,240.0 -319.4,243.1 -318.0,241.3 -317.1,244.7 -318.0,246.9 -314.6,247.5 -310.3,247.2 -306.6,243.8 -304.3,240.9 -303.2,245.3 -300.3,248.5 -297.2,249.1 -293.8,252.5 -296.6,257.7 -299.5,261.6 -301.8,264.6 -306.0,267.3 -310.3,269.1 -314.6,271.2 -318.8,274.2 -324.5,277.1 -328.8,279.1 -335.9,281.5 -340.2,281.8 -341.6,279.4 -342.2,275.0 -342.7,270.6 -345.0,266.1 -347.8,261.6 -351.5,257.7 -352.7,255.6 -353.5,250.9 -357.2,246.3 -359.2,241.6 -362.9,236.8 -364.3,234.5 -364.6,230.3 -366.3,224.4 -364.9,221.0 -363.8,217.0 -362.1,212.5 -361.5,208.3 -360.9,205.5 -365.2,205.8 -370.0,208.0 -375.7,205.5 -380.0,207.3 -384.3,205.5 -386.2,203.0 -388.5,199.4 -388.5,195.7 -389.4,193.5 -385.7,192.0 -380.0,191.3 -381.4,189.7 -375.7,189.4 -370.0,186.3 -363.8,186.3 -358.7,189.4 -351.5,190.1 -345.9,187.9 -346.4,183.2 -351.5,179.7 -355.8,176.6 -358.7,173.8 -355.8,170.5 -352.4,166.0 -357.2,166.4 -362.9,168.4 -364.3,171.7 -360.1,173.3 -363.5,175.0 -368.3,177.0 -371.2,172.5 -368.6,170.1 -372.9,168.9 -376.3,168.4 -379.4,173.3 -382.3,177.8 -384.3,181.7 -384.8,185.2 -383.7,188.2 -381.4,189.7 -385.7,190.5 -389.4,191.6 -392.8,190.5 -395.6,191.3 -397.1,193.1 -399.0,192.4 -399.0,195.7 -397.9,197.6 -395.6,201.2 -398.5,203.0 -397.9,206.5 -399.9,206.5 -402.2,205.1 -403.3,201.9 -403.3,200.1 -405.6,195.7 -408.4,192.0 -408.4,187.5 -411.3,184.4 -417.0,180.5 -421.2,176.6 -423.2,173.3 -425.2,174.6 -424.9,171.7 -428.6,172.9 -428.9,177.4 -425.2,180.5 -422.7,185.2 -418.4,186.7 -415.5,190.1 -411.3,193.5 -415.5,192.4 -416.7,195.7 -415.3,197.6 -417.8,201.2 -419.2,200.8 -418.4,197.6 -419.8,193.9 -422.7,191.3 -426.9,189.4 -429.2,187.1 -432.6,184.4 -434.6,180.5 -436.0,178.2 -438.9,177.0 -442.6,179.3 -446.8,182.1 -450.2,180.9 -453.9,181.3 -455.4,184.4 -454.8,186.7 -457.6,188.6 -461.6,190.9 -464.8,195.7 -463.6,198.3 -465.9,201.9 -469.0,204.8 -471.0,205.8 -476.4,205.8 -479.3,208.0 -481.5,206.5 -483.8,204.1 -486.7,204.8ZM43.8,26.8 50.9,22.4 55.2,25.1 48.1,28.6ZM0.6,111.4 4.0,108.1 3.2,111.9ZM27.3,422.9 31.0,425.6 33.3,430.9 36.2,431.6 36.7,433.8 42.4,433.8 42.1,438.8 39.6,439.9 39.0,443.7 34.7,448.5 33.3,447.0 34.4,442.5 30.5,439.9 33.0,438.1 33.0,433.4 31.6,429.9 28.2,424.6ZM27.3,444.4 31.6,447.0 31.6,450.1 28.2,455.1 27.6,457.1 23.4,459.0 21.9,465.1 18.2,468.4 14.8,468.0 9.7,465.9 11.1,461.8 14.8,457.9 19.7,453.9 23.4,450.1 25.3,446.3ZM12.8,469.6 14.5,469.6 13.7,470.9ZM2.6,376.6 6.9,379.3 11.1,383.3 8.3,382.4 3.4,378.4ZM40.4,368.8 44.4,368.8 43.8,370.9 40.7,370.6ZM44.7,365.8 48.1,364.9 46.7,366.7ZM10.0,361.4 11.7,363.1 10.6,363.4ZM14.3,369.1 15.4,369.7 14.5,370.0Z" fill="#f2efe9" stroke="#ddd3dc" stroke-width=".5"/><path d="M298.1,167.6 305.5,162.2 309.8,159.2 315.5,159.2 318.9,162.6 319.7,168.4 314.1,168.4 310.6,166.8 306.9,167.2 302.7,168.0ZM310.4,187.5 314.1,187.1 314.9,180.5 316.9,174.6 318.3,171.3 314.1,171.3 310.4,176.6 310.4,182.5ZM319.2,170.9 322.6,170.1 328.3,170.5 332.5,172.5 332.5,176.6 328.3,176.2 327.7,181.3 325.4,182.5 322.6,179.7 323.2,174.6ZM322.9,187.1 325.4,188.6 329.7,187.1 335.4,183.6 335.4,182.9 331.1,184.0 326.9,185.6 323.4,185.9ZM333.1,181.3 335.4,181.7 341.1,181.3 343.4,180.1 342.8,178.2 338.2,178.9 334.3,179.7ZM208.8,71.3 215.9,72.7 221.6,69.3 224.5,63.7 220.2,58.7 214.5,60.1 210.2,63.7 204.5,65.8ZM227.3,97.8 233.0,98.4 238.7,94.8 244.4,90.6 248.6,86.9 244.4,86.3 237.3,90.0 231.6,90.0 227.3,96.0ZM278.5,136.0 281.9,136.0 285.6,146.7 285.6,151.7 284.2,151.7 279.9,143.1ZM242.9,110.8 250.1,107.0 258.6,107.5 250.1,109.2ZM267.7,122.5 271.4,115.7 269.4,114.6 266.6,119.9ZM356.7,64.4 361.0,60.1 362.4,63.7 359.6,66.5ZM361.0,362.5 363.0,363.1 364.4,365.5 362.1,364.6ZM696.1,171.7 700.9,168.4 706.6,166.4 711.4,167.6 710.9,172.9 706.0,173.8 705.2,176.6 703.2,177.0 706.6,181.3 709.4,183.2 710.0,188.2 713.7,190.1 710.9,193.9 712.3,196.5 713.4,203.0 712.3,205.1 706.6,206.2 702.3,203.3 699.5,199.7 699.2,195.7 700.9,192.7 703.2,192.4 700.9,190.1 698.1,186.3 695.2,182.5 695.2,178.5 693.2,175.8ZM725.9,174.6 727.6,170.9 729.1,173.3 727.4,177.0ZM731.3,169.3 734.5,167.2 735.0,169.3 732.5,170.5ZM855.1,146.7 858.8,146.3 864.5,141.2 870.1,135.0 873.0,127.1 870.7,126.1 867.3,132.6 861.6,139.8 857.3,143.5ZM769.2,172.5 773.4,167.6 779.1,168.0 784.8,167.2 784.8,169.3 779.1,169.7 774.3,170.1 770.6,174.6ZM646.0,103.6 649.7,104.1 653.7,100.7 652.5,96.6 648.3,93.6 645.4,97.2ZM657.7,97.8 662.5,97.8 663.4,91.8 659.7,86.9 658.5,91.8ZM595.4,111.9 599.4,111.9 599.9,108.1 597.1,107.0ZM650.6,318.8 654.0,317.1 657.4,317.9 656.8,323.9 654.0,325.9 651.1,325.3 650.3,321.0ZM642.9,327.9 644.6,328.2 646.9,335.3 648.6,342.8 646.9,343.0 644.3,336.7ZM656.5,345.3 658.2,345.6 659.7,352.6 660.2,359.0 658.5,359.3 657.7,352.6ZM598.5,280.9 601.3,279.4 601.9,281.5 599.9,282.4Z" fill="#aad3df"/>
<path d="M210.2,157.9 289.3,157.9 291.0,159.2 298.4,160.9 305.5,162.2 308.7,160.9 318.9,167.2 319.7,168.9 322.6,170.5 325.4,173.3 325.7,182.5 323.7,185.6 325.4,187.5 335.4,183.2 335.4,181.3 341.6,180.1 343.1,177.8 347.6,174.6 356.7,174.6 360.1,169.7 363.3,164.7 366.7,165.1 367.2,171.3 369.0,173.8M159.0,38.7 159.0,101.9 164.7,103.6 169.0,109.2 174.7,104.7 180.4,111.9 185.2,122.0 190.3,125.1 189.8,130.1M227.0,220.4 233.8,219.7 244.4,224.4 252.3,224.4 252.3,222.7 257.2,222.7 262.9,230.0 267.1,231.9 268.5,229.3 272.8,230.0 277.1,236.8 283.6,241.9M297.8,276.5 299.8,272.1 302.7,271.8 301.3,268.5 306.4,266.7 308.9,264.6M306.4,266.7 306.4,272.4 307.2,272.4M306.4,272.4 306.1,276.8 303.8,278.6M306.1,276.8 309.8,278.3 310.6,279.7M311.8,280.9 315.5,278.6 318.9,275.6 323.4,275.0M316.3,286.4 322.0,287.0M324.3,295.1 325.1,291.1M355.9,261.0 356.2,266.7M357.3,284.4 353.9,288.2 353.9,296.8 361.0,299.7 368.1,300.5 367.2,308.2 369.5,314.8 370.1,314.8M370.1,314.8 361.6,315.1 362.4,319.6 361.0,330.2M361.0,330.2 353.9,325.0 345.9,318.5M345.9,318.5 339.7,316.2 336.0,314.2M345.9,318.5 343.9,325.3 337.4,327.9 335.4,332.4 331.7,327.9M361.0,330.2 352.5,332.4 349.6,339.6 353.9,345.3 359.6,345.3 359.6,349.7 362.4,349.7M362.4,349.7 364.7,354.0 363.8,359.9 362.4,364.3 362.4,368.8M362.4,368.8 360.1,371.5M362.4,349.7 374.4,346.2 374.6,352.0 383.7,357.0 388.6,357.8 388.9,364.9 394.3,365.2 396.5,370.3 395.1,375.7M395.1,375.7 383.7,377.8 382.3,383.3M382.3,383.3 376.6,383.0 371.5,381.8 369.0,384.8M362.4,368.8 365.3,374.8 366.7,380.8 369.0,384.8M369.0,384.8 365.3,391.1 365.3,398.0 361.6,407.7 360.1,417.7 361.0,428.1 358.1,437.0 356.2,450.1 356.2,461.8 354.4,474.2 351.9,482.9 354.4,489.7 363.8,492.9 365.5,493.8M365.0,495.2 365.0,505.8M395.1,375.7 395.7,382.7 401.7,383.3 405.6,388.6 404.8,393.3M382.3,383.3 395.1,391.7 393.4,398.7 400.8,399.0 404.8,393.3M404.8,393.3 407.1,398.7 401.4,402.2 396.3,408.4M396.3,408.4 402.2,411.0 408.2,420.1M396.3,408.4 394.6,416.0 394.0,421.1M370.1,314.8 373.8,315.9 378.1,312.5 377.5,306.5 381.5,307.7 386.6,305.4 387.4,303.4M387.4,303.4 385.7,301.1 389.4,293.9M387.4,303.4 390.0,305.4 390.0,311.7 392.8,314.8 399.4,312.8M397.4,301.4 395.1,306.8 399.4,312.8M399.4,312.8 404.8,311.7 406.5,308.2 406.5,301.7M404.8,311.7 410.5,311.7 413.3,306.2M553.8,211.5 555.3,218.7 556.7,221.4 549.9,225.4 544.5,229.3 535.4,232.9 535.4,237.4M535.4,236.1 523.1,236.1M535.4,237.4 535.4,241.6 526.0,241.6 526.0,249.4 523.1,250.9 523.1,256.2 511.7,256.2M535.4,237.4 546.4,244.7M546.4,244.7 541.6,244.7 544.5,273.6 531.7,273.9 527.4,273.3 525.4,275.9M525.4,275.9 518.9,270.3 513.2,271.8M546.4,244.7 562.9,257.1 564.4,259.2 569.5,263.1 572.0,262.8M572.0,262.8 581.4,257.4 594.2,249.4M594.2,249.4 588.5,245.3 587.1,240.6 588.5,238.4 588.0,233.6 587.1,228.0M587.1,228.0 585.7,222.0 581.4,215.9 583.7,211.8 584.6,205.1M587.1,228.0 589.4,222.7 592.8,220.4 592.8,218.0M631.8,223.4 631.2,231.3 631.2,254.0M631.2,254.0 631.2,260.1 628.4,260.1 628.4,261.6M628.4,261.6 605.6,249.4 602.8,250.9M602.8,250.9 594.2,249.4M631.2,254.0 665.1,254.0M602.8,250.9 604.2,257.1 604.2,269.7 598.5,276.5 598.8,278.9M598.8,278.9 588.5,280.0 580.0,280.9 572.9,278.9 570.3,284.7M572.0,262.8 572.0,270.6 570.1,273.9 560.7,275.0M560.7,275.0 562.9,279.4 566.4,282.7 570.3,284.7M560.7,275.0 554.4,277.4 547.9,280.3 544.5,285.3 544.5,288.5M544.5,288.5 537.3,289.0 535.9,285.3 527.7,282.7 525.4,275.9M527.7,282.7 521.1,282.1 512.6,282.7M521.1,282.1 521.1,284.7 517.4,286.7M512.3,279.1 520.8,279.4 512.6,280.6M522.3,292.5 528.8,289.6 530.8,293.9 527.4,298.2M530.8,293.9 534.5,297.4 536.5,296.5M536.5,296.5 538.8,305.7M536.5,296.5 537.3,289.0M552.1,303.7 552.4,291.1 552.1,286.7M544.5,288.5 552.1,290.2M552.1,286.7 560.1,286.4M560.1,286.4 561.5,293.9 563.5,300.8M562.7,286.7 564.7,300.5M570.3,284.7 567.8,292.5 567.8,300.0M560.1,286.4 562.7,286.7 566.4,282.7M584.6,304.8 587.1,299.7 592.8,298.8 597.1,293.9 601.3,285.3 600.5,282.4 598.8,278.9M600.5,282.4 602.8,289.6 599.4,290.2 604.2,296.8M604.2,296.8 612.7,295.4 619.8,291.1 625.0,286.7M625.0,286.7 622.7,280.9 628.4,273.0 628.4,261.6M604.2,296.8 601.3,302.5 605.6,311.9M588.0,311.7 597.6,311.9 605.6,311.9M588.0,315.4 592.2,315.4 592.2,311.7M597.6,311.9 601.1,319.6 601.1,323.9 595.7,324.7 592.0,329.3M605.6,311.9 612.7,308.2 611.3,319.6 605.6,325.3 603.6,330.4 597.1,331.6 594.8,334.4M612.7,308.2 624.1,306.2 632.1,303.4 638.0,303.7M625.0,286.7 626.9,293.4 638.0,303.7M626.9,293.4 634.1,289.6 642.6,290.5 651.1,283.8 654.0,288.2 656.8,291.1M656.8,291.1 657.7,287.3 660.2,282.4 663.6,276.5M663.6,276.5 665.3,269.1 669.9,266.1M663.6,276.5 671.0,276.2 676.7,279.4 680.7,282.4M680.7,282.4 679.0,286.7 682.4,286.7M682.4,286.7 682.4,291.1 696.6,295.4 688.1,304.0 679.6,306.2M679.6,306.2 672.5,308.5 662.5,305.7M656.8,291.1 654.0,295.4 659.7,302.5 662.5,305.7M662.5,305.7 656.8,306.2 648.3,307.7 647.7,308.2M647.7,308.2 638.0,303.7M679.6,306.2 676.7,310.2 676.7,320.5 678.1,323.0M656.8,306.2 659.7,313.9 656.8,318.2M656.8,321.0 667.3,327.0 671.6,331.6M647.7,308.2 649.1,311.9 644.6,316.8 644.3,322.2M644.3,322.2 646.9,321.0 656.8,321.0M644.3,322.2 642.6,325.9 643.4,330.7M646.9,321.0 647.7,324.7 646.9,327.6 644.0,330.7M642.6,325.9 646.9,325.0M675.0,348.2 668.2,350.8 659.7,351.1 658.5,351.1M647.7,341.9 653.7,345.1 656.5,345.6M647.7,341.9 641.7,342.5 641.2,348.2 644.9,353.2 642.6,356.7 637.5,352.0 632.1,350.6 628.4,349.7 628.4,355.5 622.7,355.5M594.8,335.0 607.3,335.0 609.9,341.0 622.1,339.0 622.7,349.7 628.4,349.7M622.7,355.5 622.7,364.9 626.7,369.1M593.7,368.2 599.9,368.5 612.7,368.5 619.8,370.3 626.7,369.1 631.8,369.7M619.8,370.3 619.8,382.4 617.0,382.4 617.0,402.5M607.0,403.2 617.0,402.5M617.0,391.1 622.7,395.8 632.6,393.6 636.9,387.6 643.7,383.0M631.8,369.7 634.1,374.8 638.9,377.8 643.7,383.0M631.8,369.7 636.9,370.3 642.3,364.3 646.6,363.4M646.6,363.4 653.7,366.4 653.4,374.8 652.3,380.2 649.1,383.6M643.7,383.0 649.1,383.6M649.1,383.6 651.1,390.1 651.1,397.4 653.7,397.7M646.6,363.4 646.0,360.8 654.5,358.4 653.4,357.0 655.4,348.2 656.5,345.6M658.5,351.1 659.4,357.0 662.2,361.1 660.5,367.6 657.7,364.3 658.2,359.9 654.5,358.4M636.9,406.4 641.2,403.5 643.7,406.1 640.3,409.7 636.9,406.4M648.3,394.5 651.1,394.5 651.1,398.7 648.3,398.0 648.3,394.5M535.1,186.3 537.1,186.3 541.6,186.7 542.2,188.6 540.5,190.5 540.2,195.0 538.8,195.3 540.2,200.5 539.1,204.1M555.0,180.9 562.1,183.2 569.2,184.8M581.4,179.3 580.0,174.6 580.0,170.9M580.0,170.9 577.2,169.7 580.0,164.3 581.7,163.9M581.7,163.9 583.4,157.9 578.3,155.7M578.3,155.7 572.0,153.5 567.2,148.6M569.8,147.2 574.3,147.2 577.2,149.9M577.2,149.9 577.2,145.4 580.0,143.1 580.6,138.3M577.2,149.9 578.3,155.7M584.6,130.6 588.3,131.1M600.5,135.5 601.6,142.1 602.8,149.0M602.8,149.0 594.5,152.2 599.4,159.2M599.4,159.2 597.1,164.3 587.4,164.3M581.7,163.9 587.4,164.3M580.0,170.9 584.3,169.7 585.7,170.9 589.7,168.0M587.4,164.3 587.1,166.0 589.7,168.0M589.7,168.0 594.8,166.4 599.1,168.4M599.1,168.4 598.8,172.1M599.4,159.2 602.8,157.9 608.5,159.6M608.5,162.2 605.9,166.8M608.5,159.6 608.5,162.2M599.1,168.4 605.9,166.8M602.8,149.0 607.0,152.2 613.6,155.7M608.5,159.6 613.6,155.7M613.6,155.7 617.0,157.0 624.1,157.4M624.1,157.4 628.4,151.3 627.2,146.7M627.2,146.7 626.9,142.1 628.1,135.5M628.1,135.5 625.0,133.0M625.0,133.0 616.4,133.0M625.0,133.0 625.0,130.1 620.7,128.6M619.8,124.6 628.4,123.5 635.8,126.6M628.1,135.5 633.2,133.5 635.8,126.6M629.2,115.2 634.1,115.7 638.0,117.3M635.8,126.6 640.3,124.0 638.0,117.3M638.0,117.3 638.3,110.3 639.7,106.4M640.3,124.0 648.0,127.1 652.5,137.4 649.1,139.8 650.6,144.0M627.2,146.7 636.9,146.3 646.9,147.7 650.6,144.0M650.6,144.0 656.8,143.1 661.1,151.3 668.2,153.9 673.9,155.2 673.3,162.2 669.0,165.5M624.1,157.4 623.2,160.5 625.2,162.2 630.9,163.4 635.8,160.9 639.2,160.5M635.8,160.9 639.7,172.5 640.3,172.9M639.2,160.5 643.2,162.2 645.4,168.9 642.3,170.5 640.3,172.9M640.3,172.9 644.6,173.3M608.5,162.2 613.6,163.0 618.4,160.0 623.2,160.5M625.2,162.2 619.8,169.7 617.8,170.1M617.8,170.1 613.6,170.9 607.0,168.4 605.9,166.8M617.8,170.1 621.0,175.4 624.4,176.6 624.7,177.8M624.7,177.8 631.2,179.7 636.9,178.2 641.5,179.7M624.7,177.8 623.8,182.5 623.8,185.2M623.8,185.2 625.5,189.0 631.2,189.0 634.9,187.5M634.9,187.5 639.7,186.3M634.9,187.5 634.1,191.3M617.0,195.0 619.8,190.9 625.5,189.0M615.3,186.7 618.4,185.2 618.7,189.7 619.8,190.9M618.4,185.2 621.3,185.2 623.8,185.2M618.4,185.2 617.0,183.2 614.7,180.5M617.0,183.2 621.3,185.2M605.0,173.8 608.5,173.8 614.1,175.0 615.3,180.5 612.7,184.4M598.8,172.5 604.8,171.3 607.0,168.4M614.1,175.0 613.6,170.9M605.0,173.8 606.2,177.8 610.2,182.5M592.5,109.2 595.7,97.8 594.8,85.7 599.9,76.0 602.8,64.4 607.0,51.3 617.0,43.5M617.0,43.5 626.9,52.0 628.4,67.2M617.0,43.5 621.3,41.1 632.6,43.5 634.1,35.4 639.7,35.4 642.6,41.9M642.6,41.9 647.7,37.0M642.6,41.9 641.2,47.4 645.4,53.5 643.2,60.1 645.4,68.6 644.6,76.0 649.7,86.3 644.0,96.0 639.2,100.7M539.3,130.1 537.3,132.6 540.2,134.5 542.2,134.5M678.1,188.2 683.8,189.7M683.8,189.7 687.5,195.0M687.5,195.0 685.8,201.2 687.5,204.1M687.5,204.1 680.7,204.4M680.7,204.4 670.5,205.8 664.5,205.5 662.5,208.3M673.9,180.9 682.4,181.7 692.4,186.7M692.4,186.7 698.1,187.1M683.8,189.7 688.1,189.0 692.4,186.7M688.1,189.0 692.4,195.7 691.5,197.9M687.5,195.0 691.5,197.9 696.6,195.0 699.2,199.7M680.7,204.4 677.3,212.5 670.5,217.3M670.5,217.3 664.8,221.0 661.9,219.7M670.5,217.3 671.6,221.4M671.6,221.4 665.3,223.7 668.2,227.0 662.5,231.3 659.7,230.6M661.1,219.7 661.1,223.7 659.7,230.3M657.7,224.4 659.4,230.3M661.9,219.7 662.2,217.6 664.2,214.6 662.5,213.2M659.9,218.3 662.2,217.6M671.6,221.4 679.6,225.4 687.2,231.3 692.4,231.6M692.4,231.6 695.8,228.3 696.6,228.7M692.4,231.6 695.2,233.6 698.1,233.6M687.5,204.1 690.9,209.0 689.5,215.3 696.1,222.0 696.1,225.4 698.1,228.7M681.8,270.9 685.3,267.9 693.8,269.1 699.5,264.3 708.0,263.1M708.0,263.1 716.5,260.1 718.3,254.0 717.1,251.9M717.1,251.9 709.7,251.3 706.9,247.2M717.1,251.9 719.4,247.8 720.2,244.7M708.0,263.1 711.1,270.3M704.6,245.7 705.7,246.0M713.4,203.7 722.2,200.5 729.3,204.1 734.2,206.2M734.2,206.2 732.5,215.3 733.0,223.7 735.9,225.4 733.3,229.3M733.3,229.3 739.3,237.7 735.3,244.1M733.3,229.3 748.7,229.3 757.2,222.4 759.2,217.0 762.1,213.5 763.5,206.5 772.0,204.8M734.2,206.2 743.6,207.3 749.3,203.3 753.5,204.8 759.2,202.6 763.5,205.8 772.0,204.1M749.3,203.3 742.1,197.6 736.5,190.1 730.8,188.2 725.1,184.0 719.4,189.0 719.4,174.6 726.5,172.5 733.6,177.4 745.0,180.5 747.8,186.7 753.5,190.1 759.2,186.3 762.1,185.6M719.4,189.0 715.1,186.3 709.4,187.5M762.1,185.6 770.6,182.5 788.2,185.6M788.2,185.6 776.3,192.4 770.0,194.6M770.0,194.6 773.4,203.0M762.1,185.6 767.7,190.9 760.6,193.1 761.2,195.7 770.0,194.6M760.6,193.1 754.9,195.3 753.0,204.1M699.5,169.3 693.8,161.3 693.8,153.5 698.9,153.5 705.2,146.3 715.1,149.0 726.5,148.6 735.0,149.9 730.8,144.4 733.6,135.5 745.0,133.0 756.4,128.6 762.1,134.0 769.2,135.0 777.7,133.5 781.7,138.3 787.7,149.9 797.6,149.0 803.3,155.2 808.4,157.0M808.4,157.0 804.7,160.0 803.3,166.0 796.2,165.5 794.2,172.5 789.9,181.7 788.2,185.6M808.4,157.0 809.8,157.0 821.8,149.9 838.9,144.4 841.1,152.6 850.8,151.7 864.5,154.4 875.8,156.1 892.0,154.4M809.8,157.0 818.9,168.4 818.9,173.8 831.7,177.8 834.6,183.6 847.4,184.0 858.8,187.9 873.0,183.6 878.7,174.6 889.2,172.5 900.9,167.6 888.6,162.6 892.0,154.4M892.0,154.4 901.4,142.1 904.3,138.3 918.5,139.8 922.8,153.5 932.7,163.4 944.1,160.5 938.4,174.6 933.6,181.3 931.6,184.8M931.6,184.8 924.2,186.3 918.5,190.1 913.7,193.9M918.5,201.9 925.3,199.0M772.0,204.1 776.3,209.0 782.0,210.1 784.8,218.7 784.8,224.4 790.5,228.0M776.3,209.0 770.6,213.5 772.0,218.7 774.3,221.0 772.0,225.4 767.7,231.0 760.6,235.2 758.1,237.7 762.1,246.3 754.1,248.5M790.5,228.0 788.2,232.6 799.0,236.8 810.7,240.3 811.0,235.5M790.5,228.0 799.0,231.9 804.7,235.2 811.0,235.5M811.0,235.5 812.7,237.7 813.3,239.0 821.8,238.7 820.9,235.8 816.1,234.5 812.7,237.7M820.9,235.8 827.5,231.9 833.2,230.6 836.9,234.5M836.9,234.5 830.9,241.6 827.5,248.5 825.5,254.0 822.6,256.2M810.7,240.3 811.0,246.3 813.3,254.0M822.6,256.2 822.6,248.8 819.5,248.8 822.4,244.7 815.5,243.8 815.5,241.6 810.7,240.3M836.9,234.5 840.8,243.1 838.0,247.8 841.7,254.0 848.0,256.5M848.0,256.5 844.8,258.9 838.9,261.0 837.7,265.2 840.8,271.2 839.4,275.0 842.3,282.1 840.6,289.6M848.0,256.5 850.8,252.8 859.6,250.0 863.6,251.6 867.3,255.6M850.8,252.8 857.3,258.9 855.9,261.6 860.2,266.1 865.9,273.6 866.2,276.5M844.8,258.9 848.0,261.6 847.4,267.0 855.9,265.2 858.2,270.6 860.5,276.5M852.8,284.7 851.4,279.1 860.5,276.5 866.2,276.5 865.9,282.9 861.0,285.0 857.3,288.5M844.8,299.7 849.7,301.7 850.5,300.5M871.9,312.5 878.1,315.4 886.1,313.9 889.8,306.0 894.6,306.2M884.7,305.1 886.6,306.8 888.1,304.2M912.8,344.8 915.9,344.5 915.4,345.9" fill="none" stroke="#bba9bd" stroke-width=".75" stroke-linejoin="round"/>
<g fill="none"><path d="M212.0,202.0 L282.0,202.5" stroke="#e8103c" stroke-opacity=".75" stroke-width="1.600"/><path d="M224.0,216.0 L339.0,215.5 L446.0,213.5" stroke="#e8103c" stroke-opacity=".7" stroke-width="1.400"/><path d="M282.0,202.8 C339.0,203.0 399.0,207.0 446.0,213.0" stroke="#d9062f" stroke-width="2.800"/><path d="M212.0,202.0 C329.0,202.0 409.0,205.0 446.0,213.0" stroke="#e8103c" stroke-opacity=".7" stroke-width="1.200"/><path d="M291.0,198.0 C359.0,198.0 414.0,202.0 446.0,213.0" stroke="#e8103c" stroke-opacity=".8" stroke-width="1.200"/><path d="M446.0,213.0 V246" stroke="#d9062f" stroke-width="2.800"/><path d="M446.0,213.0 C446.0,183.0 494.0,160.0 567.0,159.0" stroke="#e0103a" stroke-width="1.800"/><path d="M446.0,213.0 C519.0,210.0 584.0,190.0 587.0,148.0" stroke="#e0103a" stroke-width="1.100"/><path d="M446.0,213.0 C539.0,211.0 624.0,200.0 631.0,171.0" stroke="#e0103a" stroke-width="1.500"/><path d="M446.0,213.0 C599.0,217.0 723.0,275.0 723.0,378.0" stroke="#e0103a" stroke-opacity=".9" stroke-width="1"/><path d="M242.0,202.0 h6 M242.0,216.0 h6" stroke="#e8103c" stroke-width="2.600"/><path d="M595.0,236.5 l5,1.600" stroke="#e8103c" stroke-width="2.400" stroke-linecap="round"/><path d="M587.0,147.0 l-.5,5.500 M631.5,170.0 l-1.500,5" stroke="#ee5a2a" stroke-width="2.400" stroke-linecap="round"/><path d="M723.0,372.0 v6" stroke="#ee5a2a" stroke-width="1.800"/></g>
<circle cx="212" cy="202" r="5.300" fill="#2389a8" fill-opacity=".82" stroke="#1f7f9c" stroke-opacity=".6" stroke-width=".8"/>
<circle cx="224" cy="216" r="5.300" fill="#2389a8" fill-opacity=".82" stroke="#1f7f9c" stroke-opacity=".6" stroke-width=".8"/>
<circle cx="282" cy="203" r="5.300" fill="#2389a8" fill-opacity=".82" stroke="#1f7f9c" stroke-opacity=".6" stroke-width=".8"/>
<circle cx="291" cy="198" r="5.300" fill="#2389a8" fill-opacity=".82" stroke="#1f7f9c" stroke-opacity=".6" stroke-width=".8"/>
<circle cx="446" cy="246" r="5.300" fill="#2389a8" fill-opacity=".82" stroke="#1f7f9c" stroke-opacity=".6" stroke-width=".8"/>
<circle cx="567" cy="159" r="5.500" fill="#1f86a5"/>
<circle cx="587" cy="147.5" r="10" fill="#e0f36e" fill-opacity=".7" stroke="#d3ea55" stroke-opacity=".7"/>
<circle cx="631" cy="170.60000000000002" r="10" fill="#e0f36e" fill-opacity=".7" stroke="#d3ea55" stroke-opacity=".7"/>
<circle cx="723" cy="378" r="10" fill="#aaea72" fill-opacity=".72" stroke="#9be05a" stroke-opacity=".8"/>
<rect x="441" y="208" width="10" height="10" fill="#ff7a1a"/>
<g fill="none"><path d="M587.0,147.0 l-.5,5.500 M631.5,170.0 l-1.500,5" stroke="#ee5a2a" stroke-width="2.400" stroke-linecap="round"/><path d="M723.0,372.0 v6" stroke="#ee5a2a" stroke-width="1.800"/></g>
</svg>
<div id="zc"><i></i><svg class="abs" style="left:0;top:0" width="30" height="60" viewBox="0 0 30 60" stroke="#000" stroke-width="2.400"><path d="M8.500 15H21.500M15 8.500V21.500M9 45.500H21"/></svg></div>
<div id="msel"><div class="abs" style="left:4px;top:2px;width:48px;height:19px;border:1px solid #e2e6ec;border-radius:3px"></div><span class="abs" style="left:9px;top:4px;letter-spacing:.3px">100</span><svg class="abs" style="left:35px;top:8px" width="11" height="8" viewBox="0 0 11 8" fill="none" stroke="#0a2450" stroke-width="2"><path d="M1.500 1.500L5.500 5.500L9.500 1.500"/></svg><span class="abs" style="left:62px;top:4px;letter-spacing:.4px">/ 843</span></div>
<div id="attr">OSM offline (display degrades at a certain zoom level)</div>
</div>
<div id="psb"><i></i></div>
</body>
</html>
